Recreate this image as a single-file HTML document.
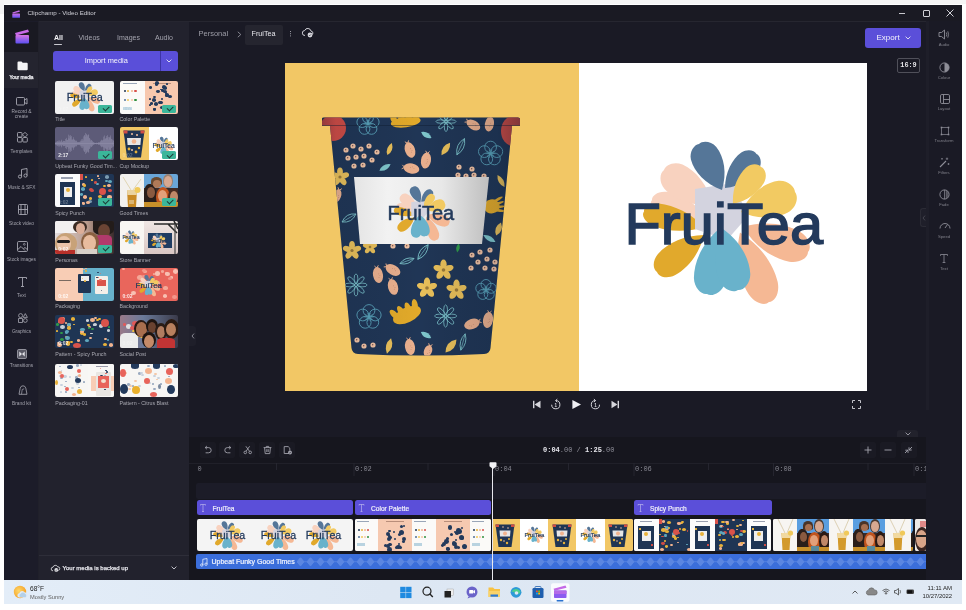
<!DOCTYPE html>
<html><head><meta charset="utf-8">
<style>
*{margin:0;padding:0;box-sizing:border-box}
html,body{width:966px;height:610px;overflow:hidden;background:#ffffff;font-family:"Liberation Sans",sans-serif;position:relative}
.a{position:absolute}
svg{position:absolute;overflow:visible}
.sl{position:absolute;left:4px;width:35px;text-align:center;color:#a3a3ad;font-size:4.8px;line-height:5px;white-space:nowrap}
.tl{position:absolute;color:#a9a9b2;font-size:5.3px;white-space:nowrap;line-height:6px}
.th{position:absolute;width:59px;height:33px;border-radius:2px;overflow:hidden}
.ck{position:absolute;right:2px;bottom:1px;width:14px;height:8px;background:#3bb69a;border-radius:1.5px}
.ck:after{content:"";position:absolute;left:4.5px;top:1.2px;width:5px;height:2.6px;border-left:1px solid #1d3b36;border-bottom:1px solid #1d3b36;transform:rotate(-45deg)}
.dur{position:absolute;left:3px;bottom:2px;font-size:5px;color:#fff;font-weight:bold;opacity:.85}
.rl{position:absolute;left:926px;width:36px;text-align:center;color:#80808a;font-size:4.2px;line-height:5px;-webkit-font-smoothing:antialiased}
</style></head><body><div id="root" style="position:absolute;left:0;top:0;width:966px;height:610px;overflow:hidden;will-change:transform">
<div class="a" style="left:0;top:0;width:966px;height:4px;background:#f5f5f5"></div>
<div class="a" style="left:0;top:0;width:3.5px;height:14px;background:#f3f3f3"></div>
<!-- window background -->
<div class="a" style="left:4px;top:5px;width:958px;height:575px;background:#1b1b25"></div>
<!-- title bar -->
<div class="a" style="left:4px;top:5px;width:958px;height:16px;background:#1a1a23"></div>
<div class="a" style="left:39px;top:21px;width:887px;height:1px;background:#262630"></div>
<svg style="left:12px;top:9.5px" width="9" height="8"><defs><linearGradient id="lg0" x1="0" y1="0" x2="0" y2="1"><stop offset="0" stop-color="#d070e6"/><stop offset="1" stop-color="#6250f0"/></linearGradient></defs><path d="M0.3 2.4L7.3 0.3L7.9 1.8L0.9 3.6Z" fill="#c46ae8"/><rect x="0.3" y="3.4" width="7.7" height="4.4" rx="0.6" fill="url(#lg0)"/></svg>
<div class="a" style="left:27.5px;top:9px;font-size:6.2px;color:#cfcfd6;white-space:nowrap;line-height:8px">Clipchamp - Video Editor</div>
<div class="a" style="left:899.3px;top:12.6px;width:6px;height:1.2px;background:#c8c8ce"></div>
<div class="a" style="left:922.5px;top:9.5px;width:7px;height:7px;border:1px solid #d0d0d6;border-radius:1px"></div>
<svg style="left:946px;top:9px" width="8" height="8"><path d="M0.5 0.5L7.5 7.5M7.5 0.5L0.5 7.5" stroke="#d0d0d6" stroke-width="1"/></svg>

<!-- left sidebar -->
<div class="a" style="left:4px;top:21px;width:35px;height:559px;background:#1c1c29"></div>
<div class="a" style="left:4px;top:22px;width:35px;height:30px;background:#191922"></div>
<div class="a" style="left:4px;top:52px;width:35px;height:36px;background:#24242f"></div>
<div class="a" style="left:38px;top:21px;width:1px;height:559px;background:#20202a"></div>
<!-- logo -->
<svg style="left:15px;top:29px" width="15" height="15"><defs><linearGradient id="lg" x1="0" y1="0" x2="0" y2="1"><stop offset="0" stop-color="#d774e4"/><stop offset="1" stop-color="#5b4ff0"/></linearGradient></defs>
<path d="M0 4L13 0.5L14 3L1 6.5Z" fill="#c86ae8"/><rect x="0.5" y="6" width="13.5" height="8.5" rx="1" fill="url(#lg)"/></svg>
<!-- sidebar icons -->
<svg style="left:17px;top:61px" width="11" height="9"><path d="M0.5 1.5a1 1 0 0 1 1-1h3l1.2 1.3h4a1 1 0 0 1 1 1v5.5a1 1 0 0 1-1 1h-8.2a1 1 0 0 1-1-1z" fill="#f4f4f6"/></svg>
<div class="sl" style="top:75px;color:#f0f0f4;-webkit-text-stroke:0.25px #f0f0f4">Your media</div>
<svg style="left:16px;top:97px" width="12" height="9"><rect x="0.5" y="0.5" width="8" height="7.5" rx="1" fill="none" stroke="#a8a8b2" stroke-width="0.9"/><path d="M8.5 3L11 1.5V7L8.5 5.5" fill="none" stroke="#a8a8b2" stroke-width="0.9"/></svg>
<div class="sl" style="top:110px;line-height:4.8px">Record &amp;<br>create</div>
<svg style="left:17px;top:132px" width="11" height="11"><rect x="0.5" y="5.5" width="4.5" height="4.5" rx="0.8" fill="none" stroke="#a8a8b2" stroke-width="0.9"/><rect x="5.8" y="5.5" width="4.5" height="4.5" rx="0.8" fill="none" stroke="#a8a8b2" stroke-width="0.9"/><rect x="0.5" y="0.5" width="4.5" height="4.5" rx="0.8" fill="none" stroke="#a8a8b2" stroke-width="0.9"/><path d="M8 0.3L10.5 2.8L8 5.3L5.5 2.8Z" fill="none" stroke="#a8a8b2" stroke-width="0.9"/></svg>
<div class="sl" style="top:149px">Templates</div>
<svg style="left:17.5px;top:168px" width="10" height="11"><path d="M3.5 8.5V1.5L9 0.5V7.5" fill="none" stroke="#a8a8b2" stroke-width="0.9"/><circle cx="2" cy="8.6" r="1.6" fill="none" stroke="#a8a8b2" stroke-width="0.9"/><circle cx="7.5" cy="7.6" r="1.6" fill="none" stroke="#a8a8b2" stroke-width="0.9"/></svg>
<div class="sl" style="top:184.5px">Music &amp; SFX</div>
<svg style="left:17.5px;top:204px" width="10" height="11"><rect x="0.5" y="0.5" width="9" height="10" rx="1" fill="none" stroke="#a8a8b2" stroke-width="0.9"/><path d="M0.5 5.5h9M3 0.5v10M7 0.5v10" stroke="#a8a8b2" stroke-width="0.9"/></svg>
<div class="sl" style="top:220.5px">Stock video</div>
<svg style="left:17px;top:240.5px" width="11" height="11"><rect x="0.5" y="0.5" width="10" height="10" rx="1.2" fill="none" stroke="#a8a8b2" stroke-width="0.9"/><path d="M0.8 8.5L4 5.5L8 9.5M6.5 7.5L8 6.5L10.2 8.5" fill="none" stroke="#a8a8b2" stroke-width="0.9"/><circle cx="7.3" cy="3.3" r="0.9" fill="none" stroke="#a8a8b2" stroke-width="0.7"/></svg>
<div class="sl" style="top:256.5px">Stock images</div>
<svg style="left:17.5px;top:276.5px" width="9" height="10"><path d="M0.5 2V0.5H8.5V2M4.5 0.5V9.5M3 9.5H6" fill="none" stroke="#a8a8b2" stroke-width="0.9"/></svg>
<div class="sl" style="top:292.5px">Text</div>
<svg style="left:17.5px;top:312.5px" width="10" height="10"><g fill="none" stroke="#a8a8b2" stroke-width="0.8"><circle cx="2.6" cy="2.6" r="2"/><path d="M7.3 0.6L9.4 4.4H5.2Z"/><rect x="0.6" y="5.6" width="3.8" height="3.8"/><circle cx="7.3" cy="7.5" r="1.9"/></g></svg>
<div class="sl" style="top:328.5px">Graphics</div>
<svg style="left:17px;top:348.5px" width="10" height="10"><rect x="0.5" y="0.5" width="9" height="9" rx="1.2" fill="#5a5a66" stroke="#a8a8b2" stroke-width="0.8"/><path d="M2.3 2.5L5 5L2.3 7.5ZM7.7 2.5L5 5L7.7 7.5Z" fill="#e2e2e8"/></svg>
<div class="sl" style="top:362.5px">Transitions</div>
<svg style="left:17.5px;top:384.5px" width="10" height="10"><path d="M1 9.3L2.2 3.2Q2.8 0.8 5 0.8Q7.2 0.8 7.8 3.2L9 9.3Z" fill="none" stroke="#a8a8b2" stroke-width="0.8"/><path d="M3.5 9.3L4.2 4.5L6.2 3.8" fill="none" stroke="#a8a8b2" stroke-width="0.7"/></svg>
<div class="sl" style="top:400.5px">Brand kit</div>

<!-- media panel -->
<div class="a" style="left:39px;top:22px;width:150px;height:558px;background:#22222d"></div>
<div class="a" style="left:54px;top:33.5px;font-size:7px;color:#f2f2f5;font-weight:bold;line-height:8px">All</div>
<div class="a" style="left:54px;top:43.5px;width:8px;height:1.5px;border-radius:1px;background:#c9c9d0"></div>
<div class="a" style="left:78.5px;top:33.5px;font-size:7px;color:#a4a4ae;line-height:8px">Videos</div>
<div class="a" style="left:117px;top:33.5px;font-size:7px;color:#a4a4ae;line-height:8px">Images</div>
<div class="a" style="left:155px;top:33.5px;font-size:7px;color:#a4a4ae;line-height:8px">Audio</div>
<div class="a" style="left:52.5px;top:50.5px;width:125.5px;height:20px;border-radius:3px;background:#5a4fd9"></div>
<div class="a" style="left:160px;top:50.5px;width:0.8px;height:20px;background:#3d34a6"></div>
<div class="a" style="left:52.5px;top:56px;width:107.5px;text-align:center;font-size:7.4px;color:#f4f4fb;line-height:9px">Import media</div>
<svg style="left:166px;top:58.5px" width="6" height="4"><path d="M0.6 0.6L3 3L5.4 0.6" fill="none" stroke="#e8e8f5" stroke-width="0.9"/></svg>
<!-- backed up -->
<div class="a" style="left:39px;top:555px;width:150px;height:1px;background:#2e2e39"></div>
<svg style="left:51px;top:564.5px" width="8" height="7"><path d="M2 5.8a1.8 1.8 0 0 1 0-3.6a2.5 2.5 0 0 1 4.7-0.4a1.8 1.8 0 0 1 0.5 3.6" fill="none" stroke="#e6e6ea" stroke-width="0.8"/><circle cx="5.3" cy="4.9" r="1.9" fill="#e6e6ea"/><path d="M4.4 4.9L5.1 5.6L6.3 4.3" fill="none" stroke="#22222d" stroke-width="0.5"/></svg>
<div class="a" style="left:62.5px;top:564.5px;font-size:6px;color:#e4e4ea;white-space:nowrap;line-height:7px;-webkit-text-stroke:0.25px #e4e4ea">Your media is backed up</div>
<svg style="left:170.5px;top:566px" width="6" height="4"><path d="M0.6 0.6L3 3L5.4 0.6" fill="none" stroke="#d0d0d8" stroke-width="0.9"/></svg>

<div class="th" style="left:55.2px;top:80.6px;width:59px"><div class="a" style="left:0.0px;top:0.0px;width:59.0px;height:33.0px;background:#f1f1f1;"></div><svg style="left:10.74px;top:0.39px" width="37.93" height="30.70"><use href="#logo"/></svg><div class="dur"><span style="opacity:.35">0:07</span></div><div class="ck"></div></div>
<div class="tl" style="left:55.2px;top:116.1px">Title</div>
<div class="th" style="left:119.5px;top:80.6px;width:58.5px"><div class="a" style="left:0.0px;top:0.0px;width:25.0px;height:33.0px;background:#fbfaf8;"></div><div class="a" style="left:25.0px;top:0.0px;width:33.5px;height:33.0px;background:#f7c8ae;"></div><div class="a" style="left:3.0px;top:2.5px;width:14.0px;height:1.4px;background:#9aa6b8;"></div><div class="a" style="left:4.0px;top:9.0px;width:2.4px;height:2.4px;background:#1f3554;border-radius:50%"></div><div class="a" style="left:7.6px;top:9.0px;width:2.4px;height:2.4px;background:#e8b23a;border-radius:50%"></div><div class="a" style="left:11.2px;top:9.0px;width:2.4px;height:2.4px;background:#f2b48f;border-radius:50%"></div><div class="a" style="left:14.8px;top:9.0px;width:2.4px;height:2.4px;background:#d94f4a;border-radius:50%"></div><div class="a" style="left:4.0px;top:18.0px;width:2.4px;height:2.4px;background:#50719a;border-radius:50%"></div><div class="a" style="left:7.6px;top:18.0px;width:2.4px;height:2.4px;background:#f0c85a;border-radius:50%"></div><div class="a" style="left:11.2px;top:18.0px;width:2.4px;height:2.4px;background:#f6c7a8;border-radius:50%"></div><div class="a" style="left:14.8px;top:18.0px;width:2.4px;height:2.4px;background:#2f8f3f;border-radius:50%"></div><div class="a" style="left:3.0px;top:26.0px;width:9.0px;height:3.0px;background:#b9d3e0;"></div><div class="a" style="left:33.0px;top:2.5px;width:18.0px;height:1.4px;background:#b98e7a;"></div><div class="a" style="left:33.8px;top:15.2px;width:2.9px;height:2.5px;background:#233a5c;border-radius:50%"></div><div class="a" style="left:41.1px;top:17.5px;width:2.2px;height:1.8px;background:#233a5c;border-radius:50%"></div><div class="a" style="left:29.3px;top:23.4px;width:2.6px;height:2.2px;background:#233a5c;border-radius:50%"></div><div class="a" style="left:33.7px;top:27.9px;width:3.1px;height:2.7px;background:#233a5c;border-radius:50%"></div><div class="a" style="left:45.7px;top:13.3px;width:3.5px;height:3.0px;background:#233a5c;border-radius:50%"></div><div class="a" style="left:32.0px;top:17.8px;width:4.1px;height:3.5px;background:#233a5c;border-radius:50%"></div><div class="a" style="left:39.5px;top:20.8px;width:3.6px;height:3.1px;background:#233a5c;border-radius:50%"></div><div class="a" style="left:30.3px;top:21.2px;width:3.4px;height:2.9px;background:#233a5c;border-radius:50%"></div><div class="a" style="left:35.0px;top:0.9px;width:4.1px;height:3.5px;background:#233a5c;border-radius:50%"></div><div class="a" style="left:38.5px;top:20.1px;width:4.1px;height:3.5px;background:#233a5c;border-radius:50%"></div><div class="a" style="left:43.3px;top:25.8px;width:2.9px;height:2.5px;background:#233a5c;border-radius:50%"></div><div class="a" style="left:45.0px;top:12.4px;width:4.2px;height:3.6px;background:#233a5c;border-radius:50%"></div><div class="a" style="left:46.6px;top:2.7px;width:2.3px;height:2.0px;background:#233a5c;border-radius:50%"></div><div class="a" style="left:33.3px;top:27.0px;width:3.0px;height:2.6px;background:#233a5c;border-radius:50%"></div><div class="a" style="left:41.5px;top:8.4px;width:3.2px;height:2.7px;background:#233a5c;border-radius:50%"></div><div class="a" style="left:36.7px;top:9.8px;width:3.4px;height:2.9px;background:#233a5c;border-radius:50%"></div><div class="a" style="left:40.7px;top:25.3px;width:3.6px;height:3.1px;background:#233a5c;border-radius:50%"></div><div class="a" style="left:47.6px;top:24.0px;width:4.4px;height:3.7px;background:#233a5c;border-radius:50%"></div><div class="a" style="left:42.4px;top:4.6px;width:4.1px;height:3.5px;background:#233a5c;border-radius:50%"></div><div class="a" style="left:48.3px;top:25.3px;width:3.4px;height:2.9px;background:#233a5c;border-radius:50%"></div><div class="a" style="left:43.3px;top:5.9px;width:4.0px;height:3.4px;background:#233a5c;border-radius:50%"></div><div class="a" style="left:40.5px;top:8.0px;width:2.2px;height:1.8px;background:#233a5c;border-radius:50%"></div><div class="a" style="left:46.1px;top:27.7px;width:2.2px;height:1.9px;background:#233a5c;border-radius:50%"></div><div class="a" style="left:45.0px;top:11.5px;width:2.4px;height:2.0px;background:#233a5c;border-radius:50%"></div><div class="a" style="left:34.9px;top:21.5px;width:4.1px;height:3.5px;background:#233a5c;border-radius:50%"></div><div class="a" style="left:29.9px;top:17.2px;width:2.1px;height:1.8px;background:#233a5c;border-radius:50%"></div><div class="a" style="left:43.4px;top:9.3px;width:4.1px;height:3.5px;background:#233a5c;border-radius:50%"></div><div class="a" style="left:48.6px;top:14.2px;width:4.4px;height:3.7px;background:#233a5c;border-radius:50%"></div><div class="a" style="left:35.2px;top:2.2px;width:3.4px;height:2.9px;background:#233a5c;border-radius:50%"></div><div class="a" style="left:29.6px;top:5.5px;width:3.0px;height:2.5px;background:#233a5c;border-radius:50%"></div><div class="dur"><span style="opacity:.3">0:07</span></div><div class="ck"></div></div>
<div class="tl" style="left:119.5px;top:116.1px">Color Palette</div>
<div class="th" style="left:55.2px;top:127.4px;width:59px"><div class="a" style="left:0.0px;top:0.0px;width:59.0px;height:33.0px;background:#5d5b78;"></div><svg style="left:0;top:0" width="59" height="33"><g fill="#8e8ca8" opacity=".9"><rect x="0.0" y="15.49" width="0.55" height="2.03"/><rect x="0.5" y="15.57" width="0.55" height="1.87"/><rect x="1.0" y="14.63" width="0.55" height="3.74"/><rect x="1.5" y="15.39" width="0.55" height="2.22"/><rect x="2.0" y="14.27" width="0.55" height="4.46"/><rect x="2.5" y="14.38" width="0.55" height="4.24"/><rect x="3.0" y="14.95" width="0.55" height="3.10"/><rect x="3.5" y="13.55" width="0.55" height="5.91"/><rect x="4.0" y="14.77" width="0.55" height="3.46"/><rect x="4.5" y="13.47" width="0.55" height="6.05"/><rect x="5.0" y="14.58" width="0.55" height="3.84"/><rect x="5.5" y="14.54" width="0.55" height="3.92"/><rect x="6.0" y="13.61" width="0.55" height="5.78"/><rect x="6.5" y="12.64" width="0.55" height="7.71"/><rect x="7.0" y="14.78" width="0.55" height="3.44"/><rect x="7.5" y="14.72" width="0.55" height="3.57"/><rect x="8.0" y="14.08" width="0.55" height="4.84"/><rect x="8.5" y="13.77" width="0.55" height="5.46"/><rect x="9.0" y="14.07" width="0.55" height="4.85"/><rect x="9.5" y="14.10" width="0.55" height="4.80"/><rect x="10.0" y="11.93" width="0.55" height="9.14"/><rect x="10.5" y="14.44" width="0.55" height="4.11"/><rect x="11.0" y="10.85" width="0.55" height="11.30"/><rect x="11.5" y="12.70" width="0.55" height="7.61"/><rect x="12.0" y="12.99" width="0.55" height="7.02"/><rect x="12.5" y="12.78" width="0.55" height="7.43"/><rect x="13.0" y="11.31" width="0.55" height="10.39"/><rect x="13.5" y="7.65" width="0.55" height="17.69"/><rect x="14.0" y="11.59" width="0.55" height="9.83"/><rect x="14.5" y="8.64" width="0.55" height="15.73"/><rect x="15.0" y="8.16" width="0.55" height="16.68"/><rect x="15.5" y="10.10" width="0.55" height="12.79"/><rect x="16.0" y="9.08" width="0.55" height="14.84"/><rect x="16.5" y="12.57" width="0.55" height="7.85"/><rect x="17.0" y="12.83" width="0.55" height="7.34"/><rect x="17.5" y="12.29" width="0.55" height="8.43"/><rect x="18.0" y="10.24" width="0.55" height="12.53"/><rect x="18.5" y="12.06" width="0.55" height="8.87"/><rect x="19.0" y="13.05" width="0.55" height="6.89"/><rect x="19.5" y="12.55" width="0.55" height="7.90"/><rect x="20.0" y="13.51" width="0.55" height="5.98"/><rect x="20.5" y="14.35" width="0.55" height="4.31"/><rect x="21.0" y="13.60" width="0.55" height="5.80"/><rect x="21.5" y="14.23" width="0.55" height="4.55"/><rect x="22.0" y="15.28" width="0.55" height="2.44"/><rect x="22.5" y="15.02" width="0.55" height="2.96"/><rect x="23.0" y="15.28" width="0.55" height="2.44"/><rect x="23.5" y="14.95" width="0.55" height="3.09"/><rect x="24.0" y="14.87" width="0.55" height="3.26"/><rect x="24.5" y="15.23" width="0.55" height="2.54"/><rect x="25.0" y="13.68" width="0.55" height="5.64"/><rect x="25.5" y="15.02" width="0.55" height="2.96"/><rect x="26.0" y="13.89" width="0.55" height="5.22"/><rect x="26.5" y="12.25" width="0.55" height="8.50"/><rect x="27.0" y="13.81" width="0.55" height="5.38"/><rect x="27.5" y="11.82" width="0.55" height="9.36"/><rect x="28.0" y="13.48" width="0.55" height="6.05"/><rect x="28.5" y="9.38" width="0.55" height="14.24"/><rect x="29.0" y="8.01" width="0.55" height="16.99"/><rect x="29.5" y="8.67" width="0.55" height="15.67"/><rect x="30.0" y="5.96" width="0.55" height="21.08"/><rect x="30.5" y="9.93" width="0.55" height="13.14"/><rect x="31.0" y="6.88" width="0.55" height="19.25"/><rect x="31.5" y="7.76" width="0.55" height="17.47"/><rect x="32.0" y="8.16" width="0.55" height="16.68"/><rect x="32.5" y="9.49" width="0.55" height="14.02"/><rect x="33.0" y="7.51" width="0.55" height="17.97"/><rect x="33.5" y="7.75" width="0.55" height="17.50"/><rect x="34.0" y="11.20" width="0.55" height="10.60"/><rect x="34.5" y="11.02" width="0.55" height="10.96"/><rect x="35.0" y="14.17" width="0.55" height="4.67"/><rect x="35.5" y="12.43" width="0.55" height="8.13"/><rect x="36.0" y="13.26" width="0.55" height="6.47"/><rect x="36.5" y="13.05" width="0.55" height="6.91"/><rect x="37.0" y="13.97" width="0.55" height="5.06"/><rect x="37.5" y="15.23" width="0.55" height="2.53"/><rect x="38.0" y="15.31" width="0.55" height="2.38"/><rect x="38.5" y="15.18" width="0.55" height="2.64"/><rect x="39.0" y="15.97" width="0.55" height="1.07"/><rect x="39.5" y="15.65" width="0.55" height="1.70"/><rect x="40.0" y="15.95" width="0.55" height="1.10"/><rect x="40.5" y="16.02" width="0.55" height="0.96"/><rect x="41.0" y="16.08" width="0.55" height="0.84"/><rect x="41.5" y="15.54" width="0.55" height="1.91"/><rect x="42.0" y="15.98" width="0.55" height="1.03"/><rect x="42.5" y="15.84" width="0.55" height="1.31"/><rect x="43.0" y="15.65" width="0.55" height="1.70"/><rect x="43.5" y="15.05" width="0.55" height="2.90"/><rect x="44.0" y="15.77" width="0.55" height="1.45"/><rect x="44.5" y="15.15" width="0.55" height="2.70"/><rect x="45.0" y="14.75" width="0.55" height="3.50"/><rect x="45.5" y="13.79" width="0.55" height="5.41"/><rect x="46.0" y="13.43" width="0.55" height="6.14"/><rect x="46.5" y="12.75" width="0.55" height="7.50"/><rect x="47.0" y="13.93" width="0.55" height="5.14"/><rect x="47.5" y="13.00" width="0.55" height="7.00"/><rect x="48.0" y="12.70" width="0.55" height="7.59"/><rect x="48.5" y="9.66" width="0.55" height="13.69"/><rect x="49.0" y="8.44" width="0.55" height="16.13"/><rect x="49.5" y="12.41" width="0.55" height="8.19"/><rect x="50.0" y="11.90" width="0.55" height="9.20"/><rect x="50.5" y="11.22" width="0.55" height="10.57"/><rect x="51.0" y="10.96" width="0.55" height="11.08"/><rect x="51.5" y="8.95" width="0.55" height="15.10"/><rect x="52.0" y="8.11" width="0.55" height="16.78"/><rect x="52.5" y="10.59" width="0.55" height="11.82"/><rect x="53.0" y="12.61" width="0.55" height="7.79"/><rect x="53.5" y="9.93" width="0.55" height="13.13"/><rect x="54.0" y="10.66" width="0.55" height="11.69"/><rect x="54.5" y="9.94" width="0.55" height="13.13"/><rect x="55.0" y="8.46" width="0.55" height="16.08"/><rect x="55.5" y="10.59" width="0.55" height="11.83"/><rect x="56.0" y="12.04" width="0.55" height="8.92"/><rect x="56.5" y="12.26" width="0.55" height="8.49"/><rect x="57.0" y="12.68" width="0.55" height="7.65"/><rect x="57.5" y="14.91" width="0.55" height="3.17"/><rect x="58.0" y="13.25" width="0.55" height="6.50"/><rect x="58.5" y="13.99" width="0.55" height="5.02"/><rect x="0" y="16" width="59" height="1"/></g></svg><div class="dur">2:17</div><div class="ck"></div></div>
<div class="tl" style="left:55.2px;top:162.9px">Upbeat Funky Good Tim...</div>
<div class="th" style="left:119.5px;top:127.4px;width:58.5px"><div class="a" style="left:0.0px;top:0.0px;width:29.0px;height:33.0px;background:#f2c765;"></div><div class="a" style="left:29.0px;top:0.0px;width:29.5px;height:33.0px;background:#ffffff;"></div><svg style="left:3.5px;top:3px" width="22" height="28"><path d="M0.5 0.5H21.5L18 27.5H4Z" fill="#1f3554"/><path d="M0.5 0.5H4.5V3.5H0.8Z" fill="#cf4c45"/><path d="M17.5 0.5H21.5L21.2 3.5H17.5Z" fill="#cf4c45"/><path d="M4 8H18L17.4 15H4.6Z" fill="#e6e6e6"/><circle cx="11" cy="11.5" r="2.3" fill="#f2b48f"/><g fill="#e8b23a"><circle cx="6" cy="19" r="1.4"/><circle cx="13" cy="22" r="1.4"/><circle cx="16" cy="18" r="1.2"/></g><g fill="#f2c2a2"><circle cx="9" cy="4" r="1"/><circle cx="14" cy="5" r="1"/><circle cx="9" cy="20" r="1"/></g></svg><svg style="left:32.21px;top:8.81px" width="23.57" height="19.08"><use href="#logo"/></svg><div class="dur"><span style="opacity:.3">0:02</span></div><div class="ck"></div></div>
<div class="tl" style="left:119.5px;top:162.9px">Cup Mockup</div>
<div class="th" style="left:55.2px;top:174.3px;width:59px"><div class="a" style="left:0.0px;top:0.0px;width:25.0px;height:33.0px;background:#fbfbfb;"></div><div class="a" style="left:25.0px;top:0.0px;width:34.0px;height:33.0px;background:#1f3554;"></div><div class="a" style="left:6.0px;top:3.0px;width:12.0px;height:1.4px;background:#9aa0b0;"></div><div class="a" style="left:5.0px;top:8.0px;width:15.0px;height:23.0px;background:#1f3554;"></div><div class="a" style="left:8.5px;top:13.0px;width:8.0px;height:10.0px;background:#eeeeee;"></div><div class="a" style="left:10.5px;top:14.0px;width:4.0px;height:4.0px;background:#e8b23a;border-radius:50%"></div><div class="a" style="left:43.1px;top:20.8px;width:3.9px;height:3.3px;background:#e8b23a;border-radius:50%"></div><div class="a" style="left:52.3px;top:20.7px;width:4.2px;height:3.6px;background:#f2b48f;border-radius:50%"></div><div class="a" style="left:25.8px;top:13.0px;width:4.3px;height:3.6px;background:#5fa7bd;border-radius:50%"></div><div class="a" style="left:43.8px;top:25.2px;width:2.1px;height:1.8px;background:#e8b23a;border-radius:50%"></div><div class="a" style="left:38.6px;top:6.9px;width:3.2px;height:2.7px;background:#cf4c45;border-radius:50%"></div><div class="a" style="left:41.6px;top:0.4px;width:2.4px;height:2.0px;background:#f2b48f;border-radius:50%"></div><div class="a" style="left:33.1px;top:25.7px;width:3.8px;height:3.2px;background:#7a9ab0;border-radius:50%"></div><div class="a" style="left:29.6px;top:22.3px;width:2.2px;height:1.8px;background:#e8b23a;border-radius:50%"></div><div class="a" style="left:42.9px;top:3.5px;width:1.8px;height:1.5px;background:#f2b48f;border-radius:50%"></div><div class="a" style="left:50.3px;top:5.9px;width:2.4px;height:2.0px;background:#5fa7bd;border-radius:50%"></div><div class="a" style="left:53.5px;top:24.4px;width:2.6px;height:2.2px;background:#e8b23a;border-radius:50%"></div><div class="a" style="left:52.9px;top:15.1px;width:3.6px;height:3.0px;background:#cf4c45;border-radius:50%"></div><div class="a" style="left:30.9px;top:26.3px;width:3.6px;height:3.1px;background:#f2b48f;border-radius:50%"></div><div class="a" style="left:53.0px;top:25.0px;width:2.6px;height:2.2px;background:#7a9ab0;border-radius:50%"></div><div class="a" style="left:35.5px;top:4.6px;width:2.2px;height:1.9px;background:#e8b23a;border-radius:50%"></div><div class="a" style="left:26.9px;top:8.4px;width:3.4px;height:2.9px;background:#f2b48f;border-radius:50%"></div><div class="a" style="left:25.1px;top:19.0px;width:2.7px;height:2.3px;background:#5fa7bd;border-radius:50%"></div><div class="a" style="left:34.0px;top:22.9px;width:3.0px;height:2.6px;background:#e8b23a;border-radius:50%"></div><div class="a" style="left:34.2px;top:13.5px;width:3.6px;height:3.1px;background:#cf4c45;border-radius:50%"></div><div class="a" style="left:26.7px;top:27.3px;width:1.9px;height:1.6px;background:#f2b48f;border-radius:50%"></div><div class="a" style="left:46.7px;top:23.7px;width:1.8px;height:1.6px;background:#7a9ab0;border-radius:50%"></div><div class="a" style="left:47.8px;top:10.3px;width:3.3px;height:2.8px;background:#e8b23a;border-radius:50%"></div><div class="a" style="left:25.3px;top:1.3px;width:2.3px;height:1.9px;background:#f2b48f;border-radius:50%"></div><div class="a" style="left:52.7px;top:5.5px;width:3.8px;height:3.2px;background:#5fa7bd;border-radius:50%"></div><div class="a" style="left:52.0px;top:26.4px;width:2.7px;height:2.3px;background:#e8b23a;border-radius:50%"></div><div class="a" style="left:35.3px;top:14.7px;width:3.8px;height:3.2px;background:#cf4c45;border-radius:50%"></div><div class="a" style="left:28.1px;top:21.0px;width:3.9px;height:3.3px;background:#f2b48f;border-radius:50%"></div><div class="a" style="left:49.9px;top:1.0px;width:4.3px;height:3.6px;background:#7a9ab0;border-radius:50%"></div><div class="a" style="left:27.6px;top:9.5px;width:3.4px;height:2.9px;background:#e8b23a;border-radius:50%"></div><div class="a" style="left:51.6px;top:9.5px;width:4.2px;height:3.6px;background:#f2b48f;border-radius:50%"></div><div class="a" style="left:40.8px;top:8.7px;width:2.6px;height:2.2px;background:#5fa7bd;border-radius:50%"></div><div class="a" style="left:30.1px;top:2.2px;width:2.2px;height:1.9px;background:#e8b23a;border-radius:50%"></div><div class="a" style="left:45.0px;top:27.9px;width:2.2px;height:1.9px;background:#cf4c45;border-radius:50%"></div><div class="a" style="left:26.4px;top:27.6px;width:3.2px;height:2.7px;background:#f2b48f;border-radius:50%"></div><div class="a" style="left:44.0px;top:14.0px;width:7.0px;height:7.0px;background:#d9534a;border-radius:50%"></div><div class="a" style="left:25.0px;top:0.0px;width:3.0px;height:6.0px;background:#d9534a;"></div><div class="dur"><span style="opacity:.35">0:02</span></div><div class="ck"></div></div>
<div class="tl" style="left:55.2px;top:209.8px">Spicy Punch</div>
<div class="th" style="left:119.5px;top:174.3px;width:58.5px"><div class="a" style="left:0.0px;top:0.0px;width:24.0px;height:33.0px;background:#f3f1ee;"></div><svg style="left:1px;top:0" width="22" height="33"><path d="M2 3L10 16M20 5L12 16" stroke="#d8c89a" stroke-width="0.7"/><path d="M6 16H16L15 33H7Z" fill="#c98a24"/><path d="M6 16H16L15.7 21H6.3Z" fill="#ead3a0"/><circle cx="16.5" cy="16" r="3" fill="#f0c95a"/><rect x="8" y="26" width="5" height="4" fill="#e8d2a8" opacity=".6"/></svg><div class="a" style="left:24.0px;top:0.0px;width:34.5px;height:33.0px;background:#6aa6d8;"></div><div class="a" style="left:24.0px;top:14.0px;width:34.5px;height:19.0px;background:#3a2c2a;"></div><div class="a" style="left:24.0px;top:10.0px;width:12.0px;height:23.0px;background:#2a1e1a;border-radius:40% 40% 0 0"></div><div class="a" style="left:27.0px;top:13.0px;width:8.0px;height:11.0px;background:#8a5a40;border-radius:50%"></div><div class="a" style="left:31.0px;top:3.0px;width:11.0px;height:8.0px;background:#6a4a30;border-radius:50% 50% 20% 20%"></div><div class="a" style="left:33.0px;top:6.0px;width:8.0px;height:8.0px;background:#b07a58;border-radius:50%"></div><div class="a" style="left:43.0px;top:0.0px;width:10.0px;height:14.0px;background:#9a8070;border-radius:50%"></div><div class="a" style="left:44.0px;top:2.0px;width:8.0px;height:11.0px;background:#d8a890;border-radius:50%"></div><div class="a" style="left:36.0px;top:13.0px;width:14.0px;height:20.0px;background:#c0541e;border-radius:50%"></div><div class="a" style="left:38.0px;top:16.0px;width:9.0px;height:12.0px;background:#e2a07a;border-radius:50%"></div><div class="a" style="left:48.0px;top:14.0px;width:11.0px;height:19.0px;background:#4a2a20;border-radius:50%"></div><div class="a" style="left:50.0px;top:17.0px;width:8.0px;height:12.0px;background:#c08868;border-radius:50%"></div><div class="a" style="left:24.0px;top:28.0px;width:34.5px;height:5.0px;background:#c8902a;"></div><div class="ck"></div></div>
<div class="tl" style="left:119.5px;top:209.8px">Good Times</div>
<div class="th" style="left:55.2px;top:221px;width:59px"><div class="a" style="left:0.0px;top:0.0px;width:59.0px;height:33.0px;background:linear-gradient(90deg,#e2dcdc,#b89a8c 55%,#3a2c2c);"></div><div class="a" style="left:0.0px;top:0.0px;width:22.0px;height:12.0px;background:#f2f0f0;"></div><div class="a" style="left:38.0px;top:0.0px;width:21.0px;height:14.0px;background:#231c1a;border-radius:0 0 40% 40%"></div><div class="a" style="left:43.0px;top:3.0px;width:12.0px;height:14.0px;background:#6a4434;border-radius:50%"></div><div class="a" style="left:40.0px;top:14.0px;width:17.0px;height:13.0px;background:#b23a6c;border-radius:30%"></div><div class="a" style="left:18.0px;top:0.0px;width:14.0px;height:12.0px;background:#3a2a22;border-radius:50%"></div><div class="a" style="left:21.0px;top:2.0px;width:9.0px;height:11.0px;background:#dcae98;border-radius:50%"></div><div class="a" style="left:26.0px;top:11.0px;width:18.0px;height:20.0px;background:#8a6040;border-radius:50%"></div><div class="a" style="left:28.0px;top:14.0px;width:13.0px;height:16.0px;background:#e8bc9e;border-radius:50%"></div><div class="a" style="left:0.0px;top:12.0px;width:22.0px;height:21.0px;background:#c8a278;border-radius:50%"></div><div class="a" style="left:2.0px;top:15.0px;width:14.0px;height:16.0px;background:#eac4a8;border-radius:50%"></div><div class="a" style="left:2.0px;top:19.0px;width:13.0px;height:3.0px;background:#1c1c1c;border-radius:1.5px"></div><div class="a" style="left:0.0px;top:29.0px;width:20.0px;height:4.0px;background:#b8302a;"></div><div class="a" style="left:22.0px;top:28.0px;width:20.0px;height:5.0px;background:#d8d0c8;"></div><div class="dur">0:02</div><div class="ck"></div></div>
<div class="tl" style="left:55.2px;top:256.5px">Personas</div>
<div class="th" style="left:119.5px;top:221px;width:58.5px"><div class="a" style="left:0.0px;top:0.0px;width:24.0px;height:33.0px;background:#f8f6f3;"></div><svg style="left:2.89px;top:8.58px" width="18.21" height="14.74"><use href="#logo"/></svg><div class="a" style="left:24.0px;top:0.0px;width:34.5px;height:33.0px;background:linear-gradient(#efe6e4,#d9c7c4);"></div><div class="a" style="left:28.0px;top:12.0px;width:24.0px;height:15.0px;background:#1f3c62;"></div><svg style="left:29.86px;top:11.53px" width="19.29" height="15.61"><use href="#logo"/></svg><svg style="left:24px;top:0" width="35" height="33"><path d="M10 3L34 3M30 0L34 8M24 3L33 12" stroke="#2a2a2a" stroke-width="1.6"/><path d="M31 3V33" stroke="#4a4a4a" stroke-width="1.2"/></svg></div>
<div class="tl" style="left:119.5px;top:256.5px">Store Banner</div>
<div class="th" style="left:55.2px;top:267.8px;width:59px"><div class="a" style="left:0.0px;top:0.0px;width:28.0px;height:33.0px;background:#f8cdb5;"></div><div class="a" style="left:28.0px;top:0.0px;width:31.0px;height:33.0px;background:#67b2cc;"></div><div class="a" style="left:4.0px;top:12.0px;width:12.0px;height:1.2px;background:#7a6a60;"></div><div class="a" style="left:23.0px;top:6.0px;width:13.0px;height:19.0px;background:#1f3554;border-radius:1px"></div><div class="a" style="left:25.5px;top:8.0px;width:8.0px;height:5.0px;background:#eeeeee;"></div><div class="a" style="left:26.7px;top:10.5px;width:1.4px;height:1.2px;background:#e8b23a;border-radius:50%"></div><div class="a" style="left:29.9px;top:0.2px;width:1.8px;height:1.5px;background:#f2b48f;border-radius:50%"></div><div class="a" style="left:30.2px;top:2.3px;width:1.9px;height:1.6px;background:#e8b23a;border-radius:50%"></div><div class="a" style="left:27.9px;top:1.1px;width:1.7px;height:1.4px;background:#f2b48f;border-radius:50%"></div><div class="a" style="left:28.6px;top:12.7px;width:2.1px;height:1.8px;background:#e8b23a;border-radius:50%"></div><div class="a" style="left:40.0px;top:8.0px;width:13.0px;height:18.0px;background:#f3efe9;border-radius:1px"></div><div class="a" style="left:42.0px;top:12.0px;width:9.0px;height:6.0px;background:#d9534a;"></div><div class="a" style="left:45.4px;top:22.0px;width:1.8px;height:1.6px;background:#233a5c;border-radius:50%"></div><div class="a" style="left:44.1px;top:11.0px;width:2.4px;height:2.0px;background:#e86a5a;border-radius:50%"></div><div class="a" style="left:42.3px;top:4.2px;width:1.5px;height:1.3px;background:#233a5c;border-radius:50%"></div><div class="a" style="left:42.1px;top:9.2px;width:1.5px;height:1.3px;background:#e86a5a;border-radius:50%"></div><div class="a" style="left:40.9px;top:9.1px;width:1.6px;height:1.3px;background:#233a5c;border-radius:50%"></div><div class="a" style="left:44.6px;top:5.6px;width:1.3px;height:1.1px;background:#e86a5a;border-radius:50%"></div><div class="dur">0:02</div></div>
<div class="tl" style="left:55.2px;top:303.3px">Packaging</div>
<div class="th" style="left:119.5px;top:267.8px;width:58.5px"><div class="a" style="left:0.0px;top:0.0px;width:58.5px;height:33.0px;background:#e9665c;"></div><div class="a" style="left:30.6px;top:12.0px;width:4.5px;height:3.8px;background:#f4a898;border-radius:50%"></div><div class="a" style="left:11.0px;top:22.8px;width:5.4px;height:4.6px;background:#f8c0b2;border-radius:50%"></div><div class="a" style="left:35.0px;top:4.5px;width:4.3px;height:3.6px;background:#f2958a;border-radius:50%"></div><div class="a" style="left:17.5px;top:7.0px;width:5.8px;height:5.0px;background:#f4a898;border-radius:50%"></div><div class="a" style="left:53.3px;top:1.2px;width:5.5px;height:4.7px;background:#f8c0b2;border-radius:50%"></div><div class="a" style="left:32.3px;top:10.7px;width:3.4px;height:2.9px;background:#f2958a;border-radius:50%"></div><div class="a" style="left:36.1px;top:12.8px;width:4.9px;height:4.1px;background:#f4a898;border-radius:50%"></div><div class="a" style="left:35.4px;top:3.7px;width:5.2px;height:4.4px;background:#f8c0b2;border-radius:50%"></div><div class="a" style="left:52.6px;top:27.1px;width:4.6px;height:3.9px;background:#f2958a;border-radius:50%"></div><div class="a" style="left:2.4px;top:0.1px;width:2.9px;height:2.4px;background:#f4a898;border-radius:50%"></div><div class="a" style="left:50.3px;top:8.5px;width:3.7px;height:3.2px;background:#f8c0b2;border-radius:50%"></div><div class="a" style="left:48.1px;top:8.8px;width:4.4px;height:3.7px;background:#f2958a;border-radius:50%"></div><div class="a" style="left:23.3px;top:1.8px;width:4.5px;height:3.8px;background:#f4a898;border-radius:50%"></div><div class="a" style="left:45.2px;top:4.4px;width:3.2px;height:2.7px;background:#f8c0b2;border-radius:50%"></div><div class="a" style="left:22.1px;top:1.0px;width:4.2px;height:3.6px;background:#f2958a;border-radius:50%"></div><div class="a" style="left:43.8px;top:18.4px;width:4.3px;height:3.7px;background:#f4a898;border-radius:50%"></div><div class="a" style="left:45.7px;top:4.2px;width:4.4px;height:3.8px;background:#f8c0b2;border-radius:50%"></div><div class="a" style="left:20.0px;top:16.8px;width:2.8px;height:2.4px;background:#f2958a;border-radius:50%"></div><div class="a" style="left:41.5px;top:2.7px;width:3.0px;height:2.5px;background:#f4a898;border-radius:50%"></div><div class="a" style="left:43.2px;top:26.5px;width:4.0px;height:3.4px;background:#f8c0b2;border-radius:50%"></div><div class="a" style="left:22.2px;top:6.9px;width:3.4px;height:2.9px;background:#f2958a;border-radius:50%"></div><div class="a" style="left:33.0px;top:5.0px;width:2.8px;height:2.4px;background:#f4a898;border-radius:50%"></div><svg style="left:15.07px;top:6.59px" width="27.86" height="22.55"><use href="#logo"/></svg><div class="dur">0:02</div></div>
<div class="tl" style="left:119.5px;top:303.3px">Background</div>
<div class="th" style="left:55.2px;top:315.4px;width:59px"><div class="a" style="left:0.0px;top:0.0px;width:59.0px;height:33.0px;background:#1f3554;"></div><div class="a" style="left:24.4px;top:15.7px;width:4.6px;height:3.9px;background:#e8b23a;border-radius:50%"></div><div class="a" style="left:25.1px;top:14.2px;width:3.6px;height:3.0px;background:#f2b48f;border-radius:50%"></div><div class="a" style="left:10.0px;top:14.3px;width:3.7px;height:3.1px;background:#5fa7bd;border-radius:50%"></div><div class="a" style="left:42.8px;top:2.6px;width:2.7px;height:2.3px;background:#e8b23a;border-radius:50%"></div><div class="a" style="left:4.9px;top:22.7px;width:3.9px;height:3.3px;background:#2f9a4a;border-radius:50%"></div><div class="a" style="left:2.3px;top:27.5px;width:4.7px;height:4.0px;background:#f2b48f;border-radius:50%"></div><div class="a" style="left:35.3px;top:17.2px;width:2.3px;height:1.9px;background:#c8d0d8;border-radius:50%"></div><div class="a" style="left:0.8px;top:14.8px;width:2.0px;height:1.7px;background:#e8b23a;border-radius:50%"></div><div class="a" style="left:10.3px;top:6.8px;width:1.9px;height:1.6px;background:#f2b48f;border-radius:50%"></div><div class="a" style="left:25.1px;top:12.3px;width:4.3px;height:3.7px;background:#5fa7bd;border-radius:50%"></div><div class="a" style="left:28.0px;top:17.9px;width:3.3px;height:2.8px;background:#e8b23a;border-radius:50%"></div><div class="a" style="left:35.8px;top:12.8px;width:2.6px;height:2.2px;background:#2f9a4a;border-radius:50%"></div><div class="a" style="left:53.9px;top:27.9px;width:4.3px;height:3.7px;background:#f2b48f;border-radius:50%"></div><div class="a" style="left:38.2px;top:8.8px;width:2.5px;height:2.1px;background:#c8d0d8;border-radius:50%"></div><div class="a" style="left:15.6px;top:2.0px;width:4.1px;height:3.5px;background:#e8b23a;border-radius:50%"></div><div class="a" style="left:21.6px;top:23.7px;width:3.0px;height:2.5px;background:#f2b48f;border-radius:50%"></div><div class="a" style="left:51.7px;top:23.7px;width:1.8px;height:1.5px;background:#5fa7bd;border-radius:50%"></div><div class="a" style="left:11.3px;top:25.5px;width:3.2px;height:2.7px;background:#e8b23a;border-radius:50%"></div><div class="a" style="left:52.9px;top:11.1px;width:2.0px;height:1.7px;background:#2f9a4a;border-radius:50%"></div><div class="a" style="left:34.0px;top:21.8px;width:2.6px;height:2.2px;background:#f2b48f;border-radius:50%"></div><div class="a" style="left:4.7px;top:9.3px;width:4.7px;height:4.0px;background:#c8d0d8;border-radius:50%"></div><div class="a" style="left:40.9px;top:3.3px;width:2.5px;height:2.2px;background:#e8b23a;border-radius:50%"></div><div class="a" style="left:5.5px;top:1.7px;width:4.2px;height:3.6px;background:#f2b48f;border-radius:50%"></div><div class="a" style="left:9.6px;top:15.7px;width:3.1px;height:2.7px;background:#5fa7bd;border-radius:50%"></div><div class="a" style="left:10.3px;top:20.5px;width:2.2px;height:1.9px;background:#e8b23a;border-radius:50%"></div><div class="a" style="left:34.8px;top:3.3px;width:3.1px;height:2.6px;background:#2f9a4a;border-radius:50%"></div><div class="a" style="left:11.5px;top:7.6px;width:4.7px;height:4.0px;background:#f2b48f;border-radius:50%"></div><div class="a" style="left:43.4px;top:8.5px;width:4.5px;height:3.8px;background:#c8d0d8;border-radius:50%"></div><div class="a" style="left:11.4px;top:11.0px;width:4.4px;height:3.7px;background:#e8b23a;border-radius:50%"></div><div class="a" style="left:34.7px;top:2.8px;width:4.8px;height:4.1px;background:#f2b48f;border-radius:50%"></div><div class="a" style="left:11.5px;top:7.2px;width:4.1px;height:3.5px;background:#5fa7bd;border-radius:50%"></div><div class="a" style="left:17.8px;top:8.3px;width:2.0px;height:1.7px;background:#e8b23a;border-radius:50%"></div><div class="a" style="left:4.9px;top:16.3px;width:2.5px;height:2.1px;background:#2f9a4a;border-radius:50%"></div><div class="a" style="left:32.5px;top:10.4px;width:3.2px;height:2.7px;background:#f2b48f;border-radius:50%"></div><div class="a" style="left:51.8px;top:13.5px;width:3.5px;height:3.0px;background:#c8d0d8;border-radius:50%"></div><div class="a" style="left:46.8px;top:5.1px;width:2.3px;height:1.9px;background:#e8b23a;border-radius:50%"></div><div class="a" style="left:49.1px;top:22.9px;width:2.5px;height:2.2px;background:#f2b48f;border-radius:50%"></div><div class="a" style="left:10.2px;top:20.7px;width:4.6px;height:3.9px;background:#5fa7bd;border-radius:50%"></div><div class="a" style="left:10.6px;top:26.6px;width:4.4px;height:3.8px;background:#e8b23a;border-radius:50%"></div><div class="a" style="left:32.6px;top:11.8px;width:2.1px;height:1.8px;background:#2f9a4a;border-radius:50%"></div><div class="a" style="left:2.1px;top:27.0px;width:2.5px;height:2.1px;background:#f2b48f;border-radius:50%"></div><div class="a" style="left:38.0px;top:7.2px;width:4.3px;height:3.6px;background:#c8d0d8;border-radius:50%"></div><div class="a" style="left:32.2px;top:8.2px;width:2.3px;height:2.0px;background:#e8b23a;border-radius:50%"></div><div class="a" style="left:38.9px;top:1.9px;width:2.5px;height:2.1px;background:#f2b48f;border-radius:50%"></div><div class="a" style="left:30.2px;top:23.9px;width:3.6px;height:3.1px;background:#5fa7bd;border-radius:50%"></div><div class="a" style="left:15.1px;top:25.7px;width:2.4px;height:2.1px;background:#e8b23a;border-radius:50%"></div><div class="a" style="left:0.9px;top:7.5px;width:3.1px;height:2.7px;background:#2f9a4a;border-radius:50%"></div><div class="a" style="left:3.3px;top:4.9px;width:2.9px;height:2.5px;background:#f2b48f;border-radius:50%"></div><div class="a" style="left:30.9px;top:3.7px;width:2.9px;height:2.5px;background:#c8d0d8;border-radius:50%"></div><div class="a" style="left:48.1px;top:27.5px;width:3.8px;height:3.2px;background:#e8b23a;border-radius:50%"></div><div class="a" style="left:3.0px;top:2.0px;width:7.0px;height:7.0px;background:#d9534a;border-radius:50%"></div><div class="a" style="left:46.0px;top:4.0px;width:8.0px;height:8.0px;background:#d9534a;border-radius:50%"></div><div class="a" style="left:18.0px;top:28.0px;width:8.0px;height:5.0px;background:#d9534a;border-radius:50%"></div><div class="dur">0:02</div></div>
<div class="tl" style="left:55.2px;top:350.9px">Pattern - Spicy Punch</div>
<div class="th" style="left:119.5px;top:315.4px;width:58.5px"><div class="a" style="left:0.0px;top:0.0px;width:58.5px;height:33.0px;background:linear-gradient(90deg,#9a7a8a,#6a7a9a 40%,#3a3a4a);"></div><div class="a" style="left:12.9px;top:5.3px;width:5.9px;height:5.0px;background:#e05a5a;border-radius:50%"></div><div class="a" style="left:15.9px;top:16.5px;width:5.8px;height:4.9px;background:#f0c040;border-radius:50%"></div><div class="a" style="left:2.3px;top:22.2px;width:3.7px;height:3.1px;background:#5a9ae0;border-radius:50%"></div><div class="a" style="left:6.3px;top:9.0px;width:5.2px;height:4.4px;background:#e0e0e0;border-radius:50%"></div><div class="a" style="left:23.5px;top:19.8px;width:4.0px;height:3.4px;background:#a040a0;border-radius:50%"></div><div class="a" style="left:3.2px;top:8.0px;width:3.7px;height:3.1px;background:#e05a5a;border-radius:50%"></div><div class="a" style="left:12.6px;top:14.2px;width:3.3px;height:2.8px;background:#f0c040;border-radius:50%"></div><div class="a" style="left:5.2px;top:24.6px;width:5.1px;height:4.3px;background:#5a9ae0;border-radius:50%"></div><div class="a" style="left:2.4px;top:24.3px;width:4.3px;height:3.7px;background:#e0e0e0;border-radius:50%"></div><div class="a" style="left:9.6px;top:22.5px;width:5.1px;height:4.3px;background:#a040a0;border-radius:50%"></div><div class="a" style="left:10.9px;top:10.7px;width:4.6px;height:3.9px;background:#e05a5a;border-radius:50%"></div><div class="a" style="left:20.9px;top:19.8px;width:3.3px;height:2.8px;background:#f0c040;border-radius:50%"></div><div class="a" style="left:0.0px;top:18.0px;width:18.0px;height:15.0px;background:#ececec;border-radius:30% 30% 0 0"></div><div class="a" style="left:14.0px;top:5.0px;width:14.0px;height:17.0px;background:#2a1a14;border-radius:50%"></div><div class="a" style="left:16.0px;top:7.0px;width:11.0px;height:15.0px;background:#a86e4e;border-radius:50%"></div><div class="a" style="left:26.0px;top:4.0px;width:12.0px;height:14.0px;background:#1e1410;border-radius:50%"></div><div class="a" style="left:28.0px;top:7.0px;width:8.0px;height:11.0px;background:#6a4230;border-radius:50%"></div><div class="a" style="left:22.0px;top:17.0px;width:14.0px;height:16.0px;background:#1e1410;border-radius:50%"></div><div class="a" style="left:24.0px;top:20.0px;width:10.0px;height:13.0px;background:#c48a68;border-radius:50%"></div><div class="a" style="left:35.0px;top:8.0px;width:12.0px;height:17.0px;background:#2a1c16;border-radius:50%"></div><div class="a" style="left:37.0px;top:11.0px;width:8.0px;height:12.0px;background:#b07c60;border-radius:50%"></div><div class="a" style="left:44.0px;top:4.0px;width:15.0px;height:20.0px;background:#2a1a12;border-radius:50%"></div><div class="a" style="left:46.0px;top:8.0px;width:10.0px;height:13.0px;background:#b8805e;border-radius:50%"></div><div class="a" style="left:37.0px;top:23.0px;width:18.0px;height:10.0px;background:#c23434;border-radius:30% 30% 0 0"></div><div class="dur"><span style="opacity:.4">0:02</span></div></div>
<div class="tl" style="left:119.5px;top:350.9px">Social Post</div>
<div class="th" style="left:55.2px;top:364px;width:59px"><div class="a" style="left:0.0px;top:0.0px;width:59.0px;height:33.0px;background:#f7f6f4;"></div><div class="a" style="left:8.8px;top:21.6px;width:1.8px;height:1.5px;background:#9aaac0;border-radius:50%"></div><div class="a" style="left:8.0px;top:10.9px;width:3.4px;height:2.9px;background:#c8d2de;border-radius:50%"></div><div class="a" style="left:9.7px;top:16.6px;width:1.8px;height:1.5px;background:#9aaac0;border-radius:50%"></div><div class="a" style="left:4.8px;top:19.6px;width:2.7px;height:2.3px;background:#c8d2de;border-radius:50%"></div><div class="a" style="left:20.2px;top:12.4px;width:2.6px;height:2.2px;background:#9aaac0;border-radius:50%"></div><div class="a" style="left:5.6px;top:6.3px;width:1.7px;height:1.4px;background:#c8d2de;border-radius:50%"></div><div class="a" style="left:4.7px;top:12.6px;width:2.8px;height:2.4px;background:#9aaac0;border-radius:50%"></div><div class="a" style="left:20.7px;top:18.0px;width:3.2px;height:2.7px;background:#c8d2de;border-radius:50%"></div><div class="a" style="left:20.6px;top:0.2px;width:3.4px;height:2.9px;background:#9aaac0;border-radius:50%"></div><div class="a" style="left:13.9px;top:12.2px;width:1.8px;height:1.5px;background:#c8d2de;border-radius:50%"></div><div class="a" style="left:4.3px;top:1.8px;width:1.8px;height:1.5px;background:#9aaac0;border-radius:50%"></div><div class="a" style="left:22.0px;top:10.5px;width:3.2px;height:2.7px;background:#c8d2de;border-radius:50%"></div><div class="a" style="left:27.6px;top:17.4px;width:2.0px;height:1.7px;background:#9aaac0;border-radius:50%"></div><div class="a" style="left:4.5px;top:27.0px;width:2.6px;height:2.2px;background:#c8d2de;border-radius:50%"></div><div class="a" style="left:9.4px;top:26.8px;width:1.9px;height:1.6px;background:#9aaac0;border-radius:50%"></div><div class="a" style="left:24.6px;top:0.3px;width:2.5px;height:2.1px;background:#c8d2de;border-radius:50%"></div><div class="a" style="left:9.4px;top:27.3px;width:2.5px;height:2.1px;background:#9aaac0;border-radius:50%"></div><div class="a" style="left:15.9px;top:22.6px;width:2.9px;height:2.4px;background:#c8d2de;border-radius:50%"></div><div class="a" style="left:23.3px;top:22.9px;width:1.7px;height:1.5px;background:#9aaac0;border-radius:50%"></div><div class="a" style="left:3.9px;top:11.4px;width:2.4px;height:2.0px;background:#c8d2de;border-radius:50%"></div><div class="a" style="left:12.0px;top:1.0px;width:6.0px;height:4.0px;background:#233a5c;border-radius:50%"></div><div class="a" style="left:3.0px;top:7.0px;width:4.0px;height:3.0px;background:#f4b48f;border-radius:50%"></div><div class="a" style="left:5.0px;top:10.0px;width:4.0px;height:4.0px;background:#e8645b;border-radius:50%"></div><div class="a" style="left:22.0px;top:5.0px;width:4.0px;height:4.0px;background:#e8645b;border-radius:50%"></div><div class="a" style="left:20.0px;top:14.0px;width:6.0px;height:5.0px;background:#233a5c;border-radius:50%"></div><div class="a" style="left:0.0px;top:16.0px;width:3.0px;height:5.0px;background:#e8b23a;border-radius:50%"></div><div class="a" style="left:10.0px;top:23.0px;width:4.0px;height:4.0px;background:#e8645b;border-radius:50%"></div><div class="a" style="left:22.0px;top:25.0px;width:5.0px;height:5.0px;background:#e8b23a;border-radius:50%"></div><div class="a" style="left:17.0px;top:29.0px;width:4.0px;height:3.0px;background:#f4b48f;border-radius:50%"></div><div class="a" style="left:23.0px;top:10.0px;width:3.0px;height:3.0px;background:#f4b48f;border-radius:50%"></div><div class="a" style="left:33.0px;top:0.0px;width:26.0px;height:33.0px;background:#f8f7f5;"></div><div class="a" style="left:36.0px;top:12.0px;width:25.0px;height:15.0px;background:#f8cdb5;"></div><div class="a" style="left:41.0px;top:8.0px;width:15.0px;height:24.0px;background:#e9e6e2;border-radius:1px"></div><div class="a" style="left:45.1px;top:11.4px;width:2.3px;height:1.9px;background:#233a5c;border-radius:50%"></div><div class="a" style="left:50.0px;top:8.6px;width:2.2px;height:1.9px;background:#e8645b;border-radius:50%"></div><div class="a" style="left:50.6px;top:23.4px;width:1.2px;height:1.0px;background:#9aaac0;border-radius:50%"></div><div class="a" style="left:50.8px;top:7.3px;width:2.2px;height:1.8px;background:#233a5c;border-radius:50%"></div><div class="a" style="left:42.7px;top:16.1px;width:1.7px;height:1.4px;background:#e8645b;border-radius:50%"></div><div class="a" style="left:47.9px;top:21.5px;width:2.2px;height:1.9px;background:#9aaac0;border-radius:50%"></div><div class="a" style="left:49.3px;top:24.5px;width:1.9px;height:1.7px;background:#233a5c;border-radius:50%"></div><div class="a" style="left:46.3px;top:21.9px;width:1.9px;height:1.7px;background:#e8645b;border-radius:50%"></div><div class="a" style="left:49.0px;top:10.7px;width:2.3px;height:2.0px;background:#9aaac0;border-radius:50%"></div><div class="a" style="left:49.9px;top:5.5px;width:2.2px;height:1.8px;background:#233a5c;border-radius:50%"></div><div class="a" style="left:46.5px;top:16.9px;width:2.2px;height:1.8px;background:#e8645b;border-radius:50%"></div><div class="a" style="left:47.7px;top:18.7px;width:2.3px;height:1.9px;background:#9aaac0;border-radius:50%"></div><div class="a" style="left:42.5px;top:1.9px;width:1.5px;height:1.3px;background:#233a5c;border-radius:50%"></div><div class="a" style="left:44.6px;top:3.7px;width:1.3px;height:1.1px;background:#e8645b;border-radius:50%"></div><div class="a" style="left:43.0px;top:12.0px;width:11.0px;height:12.0px;background:#e8645b;"></div><div class="a" style="left:46.0px;top:15.0px;width:5.0px;height:4.0px;background:#f2e0d0;border-radius:50%"></div><div class="a" style="left:41.0px;top:2.0px;width:12.0px;height:1.3px;background:#9a9aa8;"></div></div>
<div class="tl" style="left:55.2px;top:399.5px">Packaging-01</div>
<div class="th" style="left:119.5px;top:364px;width:58.5px"><div class="a" style="left:0.0px;top:0.0px;width:58.5px;height:33.0px;background:#f7f6f4;"></div><div class="a" style="left:27.7px;top:0.8px;width:3.2px;height:2.7px;background:#9aaac0;border-radius:50%"></div><div class="a" style="left:9.5px;top:19.5px;width:1.6px;height:1.4px;background:#c8d2de;border-radius:50%"></div><div class="a" style="left:14.4px;top:15.7px;width:3.0px;height:2.5px;background:#f4c8a8;border-radius:50%"></div><div class="a" style="left:48.1px;top:11.5px;width:2.1px;height:1.8px;background:#9aaac0;border-radius:50%"></div><div class="a" style="left:18.6px;top:20.8px;width:3.2px;height:2.7px;background:#c8d2de;border-radius:50%"></div><div class="a" style="left:9.9px;top:20.5px;width:2.3px;height:2.0px;background:#f4c8a8;border-radius:50%"></div><div class="a" style="left:12.0px;top:20.9px;width:2.1px;height:1.8px;background:#9aaac0;border-radius:50%"></div><div class="a" style="left:28.9px;top:7.3px;width:2.1px;height:1.8px;background:#c8d2de;border-radius:50%"></div><div class="a" style="left:8.8px;top:23.6px;width:3.2px;height:2.7px;background:#f4c8a8;border-radius:50%"></div><div class="a" style="left:40.3px;top:18.6px;width:2.7px;height:2.3px;background:#9aaac0;border-radius:50%"></div><div class="a" style="left:28.7px;top:17.8px;width:2.5px;height:2.1px;background:#c8d2de;border-radius:50%"></div><div class="a" style="left:5.4px;top:8.0px;width:2.2px;height:1.9px;background:#f4c8a8;border-radius:50%"></div><div class="a" style="left:33.5px;top:23.6px;width:2.5px;height:2.2px;background:#9aaac0;border-radius:50%"></div><div class="a" style="left:21.3px;top:10.1px;width:2.8px;height:2.3px;background:#c8d2de;border-radius:50%"></div><div class="a" style="left:36.8px;top:14.7px;width:2.1px;height:1.8px;background:#f4c8a8;border-radius:50%"></div><div class="a" style="left:44.5px;top:1.3px;width:2.2px;height:1.9px;background:#9aaac0;border-radius:50%"></div><div class="a" style="left:0.8px;top:7.5px;width:2.8px;height:2.4px;background:#c8d2de;border-radius:50%"></div><div class="a" style="left:34.9px;top:8.9px;width:2.3px;height:1.9px;background:#f4c8a8;border-radius:50%"></div><div class="a" style="left:32.5px;top:19.4px;width:1.7px;height:1.4px;background:#9aaac0;border-radius:50%"></div><div class="a" style="left:37.6px;top:13.2px;width:2.5px;height:2.1px;background:#c8d2de;border-radius:50%"></div><div class="a" style="left:28.1px;top:5.1px;width:2.7px;height:2.3px;background:#f4c8a8;border-radius:50%"></div><div class="a" style="left:7.4px;top:19.4px;width:3.5px;height:3.0px;background:#9aaac0;border-radius:50%"></div><div class="a" style="left:33.6px;top:10.7px;width:3.2px;height:2.7px;background:#c8d2de;border-radius:50%"></div><div class="a" style="left:48.7px;top:22.9px;width:2.9px;height:2.4px;background:#f4c8a8;border-radius:50%"></div><div class="a" style="left:18.4px;top:8.4px;width:3.5px;height:3.0px;background:#9aaac0;border-radius:50%"></div><div class="a" style="left:20.1px;top:7.5px;width:3.0px;height:2.5px;background:#c8d2de;border-radius:50%"></div><div class="a" style="left:11.0px;top:0.0px;width:8.0px;height:5.0px;background:#233a5c;border-radius:0 0 50% 50%"></div><div class="a" style="left:0.0px;top:5.0px;width:6.0px;height:8.0px;background:#e8645b;border-radius:50%"></div><div class="a" style="left:25.0px;top:4.0px;width:7.0px;height:6.0px;background:#f4b48f;border-radius:50%"></div><div class="a" style="left:33.0px;top:0.0px;width:7.0px;height:5.0px;background:#233a5c;border-radius:0 0 50% 50%"></div><div class="a" style="left:46.0px;top:4.0px;width:7.0px;height:7.0px;background:#e8645b;border-radius:50%"></div><div class="a" style="left:53.0px;top:0.0px;width:6.0px;height:4.0px;background:#233a5c;border-radius:50%"></div><div class="a" style="left:24.0px;top:14.0px;width:6.0px;height:6.0px;background:#e8645b;border-radius:50%"></div><div class="a" style="left:45.0px;top:14.0px;width:7.0px;height:6.0px;background:#f4b48f;border-radius:50%"></div><div class="a" style="left:0.0px;top:20.0px;width:8.0px;height:10.0px;background:#233a5c;border-radius:50%"></div><div class="a" style="left:12.0px;top:22.0px;width:8.0px;height:8.0px;background:#eab02c;border-radius:50%"></div><div class="a" style="left:47.0px;top:21.0px;width:8.0px;height:9.0px;background:#233a5c;border-radius:50%"></div><div class="a" style="left:30.0px;top:28.0px;width:7.0px;height:5.0px;background:#e8645b;border-radius:50%"></div><div class="a" style="left:38.0px;top:20.0px;width:3.0px;height:5.0px;background:#7a8aa0;border-radius:50%"></div></div>
<div class="tl" style="left:119.5px;top:399.5px">Pattern - Citrus Blast</div>
<!--MEDIA_THUMBS_END-->

<!-- main -->
<div class="a" style="left:189px;top:22px;width:737px;height:558px;background:#1a1a25"></div>
<svg width="0" height="0" style="position:absolute"><defs>
<symbol id="logo" viewBox="0 0 210 170">
<path d="M87.0 83.6 C76.7 68.7 61.6 59.2 47.0 56.8 C38.2 55.7 31.7 60.5 32.0 65.0 C29.0 68.4 31.3 76.2 39.0 80.7 C51.9 87.6 69.8 89.2 87.0 83.6Z" fill="#f8d2bf"/><path d="M92.4 69.6 C87.9 50.3 76.3 35.8 62.5 29.5 C54.0 26.1 45.5 29.8 44.0 35.0 C39.6 38.1 38.8 47.3 44.8 54.3 C55.2 65.3 72.7 71.6 92.4 69.6Z" fill="#f8d2bf"/><path d="M84.0 92.0 C71.5 78.6 54.4 70.2 38.9 68.5 C29.5 67.8 23.2 72.4 24.0 76.6 C21.2 79.9 24.5 87.0 33.1 90.9 C47.6 96.8 66.5 97.7 84.0 92.0Z" fill="#e1a92c"/><path d="M84.0 100.0 C65.0 100.1 48.1 107.6 38.0 118.9 C32.1 126.0 32.8 134.5 37.0 137.0 C38.4 141.7 46.6 144.3 54.8 140.3 C68.2 133.1 79.5 118.4 84.0 100.0Z" fill="#e1a92c"/><path d="M75 54 L113 48 L128 81 L107 105 L75 94 Z" fill="#d3d3df"/><path d="M123.0 92.0 C134.4 110.9 152.0 123.3 169.3 126.7 C179.9 128.4 188.1 122.7 188.0 117.0 C191.8 112.8 189.6 103.1 180.7 97.3 C165.5 88.2 144.1 85.6 123.0 92.0Z" fill="#f5b894"/><path d="M120.0 97.5 C114.8 120.1 118.6 142.9 128.7 159.2 C135.1 168.7 145.0 171.1 149.0 167.0 C154.7 167.1 160.0 158.3 157.7 147.0 C153.3 128.5 139.7 109.7 120.0 97.5Z" fill="#f5b894"/><path d="M99.0 94.0 C82.7 107.8 74.0 126.3 73.9 143.1 C74.3 153.3 81.5 160.0 87.0 159.0 C91.8 161.9 100.9 158.2 104.9 148.9 C110.8 133.2 109.3 112.7 99.0 94.0Z" fill="#69b2cb"/><path d="M103.0 94.0 C93.6 112.5 93.0 132.0 99.7 146.6 C104.1 155.2 113.4 158.1 118.0 155.0 C123.5 155.6 130.4 148.7 130.3 139.0 C129.5 123.1 119.9 106.0 103.0 94.0Z" fill="#69b2cb"/><path d="M102.0 55.0 C107.1 38.1 104.4 22.2 96.3 11.9 C91.0 5.9 82.5 5.5 79.0 9.0 C74.1 9.7 69.3 16.7 70.9 24.5 C74.3 37.2 85.4 48.9 102.0 55.0Z" fill="#557698"/><path d="M105.0 53.0 C120.5 51.5 132.9 44.1 139.1 34.0 C142.5 27.7 140.4 20.7 136.5 19.0 C134.5 15.2 127.3 13.7 121.3 17.6 C111.8 24.5 105.3 37.5 105.0 53.0Z" fill="#557698"/><path d="M113.0 69.0 C127.9 65.7 139.4 56.9 144.6 46.4 C147.5 39.8 144.9 33.2 141.0 32.0 C138.8 28.6 131.7 27.9 126.2 32.4 C117.4 40.4 112.1 53.8 113.0 69.0Z" fill="#f2ca62"/><path d="M121.0 77.0 C139.3 85.1 157.4 84.2 169.9 76.3 C177.1 71.1 178.5 61.5 175.0 57.0 C174.7 51.3 167.5 44.9 158.5 45.7 C144.0 47.8 129.7 58.9 121.0 77.0Z" fill="#f2ca62"/>
<text x="4.5" y="108.5" font-family="Liberation Sans" font-size="58" fill="#233a5c" stroke="#233a5c" stroke-width="1.5" textLength="198.5" lengthAdjust="spacingAndGlyphs">FruiTea</text>
</symbol>
</defs></svg>

<!-- breadcrumb -->
<div class="a" style="left:198.5px;top:29px;font-size:7.5px;color:#9c9ca6;line-height:9px">Personal</div>
<svg style="left:236.5px;top:30.5px" width="5" height="7"><path d="M0.8 0.8L3.8 3.5L0.8 6.2" fill="none" stroke="#a0a0aa" stroke-width="0.8"/></svg>
<div class="a" style="left:244.5px;top:24.5px;width:38.5px;height:20px;border-radius:2px;background:#25252f"></div>
<div class="a" style="left:251.5px;top:29px;font-size:7.2px;color:#e8e8ee;line-height:9px">FruiTea</div>
<div class="a" style="left:289.5px;top:30.5px;width:1px;height:1px;background:#9a9aa3;box-shadow:0 2.2px 0 #9a9aa3,0 4.4px 0 #9a9aa3"></div>
<svg style="left:302px;top:28px" width="12" height="10"><path d="M3 7.5a2.5 2.5 0 0 1-0.3-5a3.3 3.3 0 0 1 6.3 0.6a2 2 0 0 1 0.5 3.9" fill="none" stroke="#e0e0e6" stroke-width="0.9"/><circle cx="8" cy="7" r="2.4" fill="#d8d8de"/><path d="M6.9 7L7.7 7.8L9.1 6.3" fill="none" stroke="#1b1b26" stroke-width="0.6"/></svg>

<!-- export -->
<div class="a" style="left:865px;top:27.5px;width:56px;height:20px;border-radius:3px;background:#5b4fd9"></div>
<div class="a" style="left:876.5px;top:32.5px;font-size:8px;color:#f4f4fb;line-height:10px">Export</div>
<svg style="left:904.5px;top:36px" width="6" height="4"><path d="M0.6 0.6L3 3L5.4 0.6" fill="none" stroke="#e8e8f5" stroke-width="0.9"/></svg>
<div class="a" style="left:897px;top:57.5px;width:23px;height:15px;border:1px solid #50505a;border-radius:2px"></div>
<div class="a" style="left:897px;top:61px;width:23px;text-align:center;font-family:'Liberation Mono',monospace;font-weight:bold;font-size:6.8px;color:#e6e6ea;line-height:8px">16:9</div>

<!-- preview -->
<div class="a" style="left:285px;top:63px;width:294px;height:328px;background:#f2c765"></div>
<div class="a" style="left:579px;top:63px;width:287.5px;height:328px;background:#ffffff"></div>
<svg style="left:620px;top:135px" width="210" height="170"><use href="#logo"/></svg>

<!-- cup -->
<svg style="left:0;top:0" width="966" height="610">
<defs>
<clipPath id="cupc"><path d="M322 118.5Q322 117.5 324 117.5H518Q520 117.5 520 119V125.5H512L490.5 348Q490 353.5 484 354Q421 357 358 354Q352 353.5 351.5 348L330 125.5H322Z"/></clipPath>
<linearGradient id="cupg" x1="0" x2="1"><stop offset="0" stop-color="#081528" stop-opacity=".6"/><stop offset=".15" stop-color="#081528" stop-opacity=".1"/><stop offset=".5" stop-color="#000" stop-opacity="0"/><stop offset=".82" stop-color="#081528" stop-opacity=".15"/><stop offset="1" stop-color="#081528" stop-opacity=".6"/></linearGradient>
<linearGradient id="labg" x1="0" x2="1"><stop offset="0" stop-color="#e4e4e4"/><stop offset=".25" stop-color="#f2f2f2"/><stop offset=".65" stop-color="#e8e8e8"/><stop offset="1" stop-color="#bfbfbf"/></linearGradient>
</defs>
<g clip-path="url(#cupc)">
<rect x="300" y="110" width="240" height="250" fill="#203656"/>
<ellipse cx="333" cy="128" rx="13" ry="13" fill="#cf4c45"/><ellipse cx="513" cy="131" rx="12" ry="15" fill="#cf4c45"/><g fill="none" stroke="#5aa3ba" stroke-width="0.9"><circle cx="368.0" cy="118.0" r="5.4"/><circle cx="373.7" cy="122.1" r="5.4"/><circle cx="371.5" cy="128.9" r="5.4"/><circle cx="364.5" cy="128.9" r="5.4"/><circle cx="362.3" cy="122.1" r="5.4"/></g><g stroke="#5aa3ba" stroke-width="0.7"><path d="M368 124L372.2 124.0"/><path d="M368 124L371.4 126.5"/><path d="M368 124L369.3 128.0"/><path d="M368 124L366.7 128.0"/><path d="M368 124L364.6 126.5"/><path d="M368 124L363.8 124.0"/><path d="M368 124L364.6 121.5"/><path d="M368 124L366.7 120.0"/><path d="M368 124L369.3 120.0"/><path d="M368 124L371.4 121.5"/></g><g transform="rotate(-8 405.7 122)" fill="#e2aa2a"><ellipse cx="405.7" cy="122" rx="15.0" ry="5.333333333333333"/><ellipse cx="394.4" cy="118.0" rx="3.0" ry="4.6" transform="rotate(-20 394.4 118.0)"/><ellipse cx="401.9" cy="118.0" rx="3.0" ry="4.6" transform="rotate(-8 401.9 118.0)"/><ellipse cx="409.4" cy="118.0" rx="3.0" ry="4.6" transform="rotate(4 409.4 118.0)"/><ellipse cx="416.9" cy="118.0" rx="3.0" ry="4.6" transform="rotate(16 416.9 118.0)"/></g><g fill="none" stroke="#7cc3cc" stroke-width="0.8"><ellipse cx="451.5" cy="121.5" rx="4.5" ry="1.7" transform="rotate(0 451.5 121.5)"/><ellipse cx="449.9" cy="125.4" rx="4.5" ry="1.7" transform="rotate(45 449.9 125.4)"/><ellipse cx="446.0" cy="127.0" rx="4.5" ry="1.7" transform="rotate(90 446.0 127.0)"/><ellipse cx="442.1" cy="125.4" rx="4.5" ry="1.7" transform="rotate(135 442.1 125.4)"/><ellipse cx="440.5" cy="121.5" rx="4.5" ry="1.7" transform="rotate(180 440.5 121.5)"/><ellipse cx="442.1" cy="117.6" rx="4.5" ry="1.7" transform="rotate(225 442.1 117.6)"/><ellipse cx="446.0" cy="116.0" rx="4.5" ry="1.7" transform="rotate(270 446.0 116.0)"/><ellipse cx="449.9" cy="117.6" rx="4.5" ry="1.7" transform="rotate(315 449.9 117.6)"/><circle cx="446" cy="121.5" r="1.5"/></g><g transform="rotate(-60 473.4 125)"><ellipse cx="473.4" cy="125" rx="4.5" ry="7.5" fill="#eab08e"/><path d="M471.4 116.0L473.4 118.5L475.4 116.0" fill="none" stroke="#eab08e" stroke-width="0.9"/><g fill="#b57e66"><circle cx="474.4" cy="124" r="0.4"/><circle cx="475.2" cy="126" r="0.4"/><circle cx="474.0" cy="127.5" r="0.4"/></g></g><g transform="rotate(10 489.4 124)"><ellipse cx="489.4" cy="124" rx="4.5" ry="7.5" fill="#eab08e"/><path d="M487.4 115.0L489.4 117.5L491.4 115.0" fill="none" stroke="#eab08e" stroke-width="0.9"/><g fill="#b57e66"><circle cx="490.4" cy="123" r="0.4"/><circle cx="491.2" cy="125" r="0.4"/><circle cx="490.0" cy="126.5" r="0.4"/></g></g><circle cx="346" cy="150" r="2.6" fill="#f1c3a4"/><circle cx="345.7" cy="149.7" r="0.7" fill="#6a4a4a"/><circle cx="353" cy="146" r="2.6" fill="#f1c3a4"/><circle cx="352.7" cy="145.7" r="0.7" fill="#6a4a4a"/><circle cx="361" cy="149" r="2.6" fill="#f1c3a4"/><circle cx="360.7" cy="148.7" r="0.7" fill="#6a4a4a"/><circle cx="369" cy="146" r="2.6" fill="#f1c3a4"/><circle cx="368.7" cy="145.7" r="0.7" fill="#6a4a4a"/><circle cx="377" cy="152" r="2.6" fill="#f1c3a4"/><circle cx="376.7" cy="151.7" r="0.7" fill="#6a4a4a"/><circle cx="348" cy="158" r="2.6" fill="#f1c3a4"/><circle cx="347.7" cy="157.7" r="0.7" fill="#6a4a4a"/><circle cx="356" cy="157" r="2.6" fill="#f1c3a4"/><circle cx="355.7" cy="156.7" r="0.7" fill="#6a4a4a"/><circle cx="364" cy="156" r="2.6" fill="#f1c3a4"/><circle cx="363.7" cy="155.7" r="0.7" fill="#6a4a4a"/><circle cx="372" cy="160" r="2.6" fill="#f1c3a4"/><circle cx="371.7" cy="159.7" r="0.7" fill="#6a4a4a"/><circle cx="354" cy="166" r="2.6" fill="#f1c3a4"/><circle cx="353.7" cy="165.7" r="0.7" fill="#6a4a4a"/><circle cx="363" cy="165" r="2.6" fill="#f1c3a4"/><circle cx="362.7" cy="164.7" r="0.7" fill="#6a4a4a"/><path d="M389.6 142.5Q394.6 149 389.6 155.5Q384.6 149 389.6 142.5Z" fill="#e9c05a" transform="rotate(20 389.6 149)"/><g transform="rotate(-20 410 150)"><ellipse cx="410" cy="150" rx="5" ry="8" fill="#eab08e"/><path d="M408 140.5L410 143L412 140.5" fill="none" stroke="#eab08e" stroke-width="0.9"/><g fill="#b57e66"><circle cx="411" cy="149" r="0.4"/><circle cx="411.8" cy="151" r="0.4"/><circle cx="410.6" cy="152.5" r="0.4"/></g></g><g transform="rotate(10 426 160.5)"><ellipse cx="426" cy="160.5" rx="5" ry="8" fill="#eab08e"/><path d="M424 151.0L426 153.5L428 151.0" fill="none" stroke="#eab08e" stroke-width="0.9"/><g fill="#b57e66"><circle cx="427" cy="159.5" r="0.4"/><circle cx="427.8" cy="161.5" r="0.4"/><circle cx="426.6" cy="163.0" r="0.4"/></g></g><g transform="rotate(-80 411.4 168.5)"><ellipse cx="411.4" cy="168.5" rx="5" ry="8" fill="#eab08e"/><path d="M409.4 159.0L411.4 161.5L413.4 159.0" fill="none" stroke="#eab08e" stroke-width="0.9"/><g fill="#b57e66"><circle cx="412.4" cy="167.5" r="0.4"/><circle cx="413.2" cy="169.5" r="0.4"/><circle cx="412.0" cy="171.0" r="0.4"/></g></g><path d="M426.3 129.0Q431.3 135 426.3 141.0Q421.3 135 426.3 129.0Z" fill="#7ec6cc" transform="rotate(-60 426.3 135)"/><path d="M445.8 141.5Q451.8 149 445.8 156.5Q439.8 149 445.8 141.5Z" fill="#e9c05a" transform="rotate(35 445.8 149)"/><path d="M460.7 137.7Q466.7 146.7 460.7 155.7Q454.7 146.7 460.7 137.7Z" fill="none" stroke="#7ec6cc" stroke-width="0.8" transform="rotate(25 460.7 146.7)"/><path d="M460.7 137.7V155.7" stroke="#7ec6cc" stroke-width="0.6" transform="rotate(25 460.7 146.7)"/><g fill="none" stroke="#5aa3ba" stroke-width="0.9"><circle cx="490.6" cy="147.1" r="5.9"/><circle cx="496.8" cy="151.6" r="5.9"/><circle cx="494.4" cy="158.9" r="5.9"/><circle cx="486.8" cy="158.9" r="5.9"/><circle cx="484.4" cy="151.6" r="5.9"/></g><g stroke="#5aa3ba" stroke-width="0.7"><path d="M490.6 153.6L495.2 153.6"/><path d="M490.6 153.6L494.3 156.3"/><path d="M490.6 153.6L492.0 157.9"/><path d="M490.6 153.6L489.2 157.9"/><path d="M490.6 153.6L486.9 156.3"/><path d="M490.6 153.6L486.1 153.6"/><path d="M490.6 153.6L486.9 150.9"/><path d="M490.6 153.6L489.2 149.3"/><path d="M490.6 153.6L492.0 149.3"/><path d="M490.6 153.6L494.3 150.9"/></g><path d="M385 160.9Q390 167.4 385 173.9Q380 167.4 385 160.9Z" fill="#7ec6cc" transform="rotate(60 385 167.4)"/><circle cx="459" cy="167" r="2.6" fill="#f1c3a4"/><circle cx="458.7" cy="166.7" r="0.7" fill="#6a4a4a"/><circle cx="472" cy="169" r="2.6" fill="#f1c3a4"/><circle cx="471.7" cy="168.7" r="0.7" fill="#6a4a4a"/><circle cx="458" cy="175" r="2.6" fill="#f1c3a4"/><circle cx="457.7" cy="174.7" r="0.7" fill="#6a4a4a"/><circle cx="466" cy="176" r="2.6" fill="#f1c3a4"/><circle cx="465.7" cy="175.7" r="0.7" fill="#6a4a4a"/><circle cx="474" cy="175" r="2.6" fill="#f1c3a4"/><circle cx="473.7" cy="174.7" r="0.7" fill="#6a4a4a"/><circle cx="484" cy="176" r="2.6" fill="#f1c3a4"/><circle cx="483.7" cy="175.7" r="0.7" fill="#6a4a4a"/><ellipse cx="340.0" cy="172.1" rx="2.9" ry="4.5" transform="rotate(0 340.0 172.1)" fill="#e9c05a"/><ellipse cx="344.7" cy="175.5" rx="2.9" ry="4.5" transform="rotate(72 344.7 175.5)" fill="#e9c05a"/><ellipse cx="342.9" cy="181.0" rx="2.9" ry="4.5" transform="rotate(144 342.9 181.0)" fill="#e9c05a"/><ellipse cx="337.1" cy="181.0" rx="2.9" ry="4.5" transform="rotate(216 337.1 181.0)" fill="#e9c05a"/><ellipse cx="335.3" cy="175.5" rx="2.9" ry="4.5" transform="rotate(288 335.3 175.5)" fill="#e9c05a"/><circle cx="340" cy="177" r="1.6" fill="#9a7a3a"/><path d="M349 210.0Q355 218 349 226.0Q343 218 349 210.0Z" fill="none" stroke="#7ec6cc" stroke-width="0.8" transform="rotate(60 349 218)"/><path d="M349 210.0V226.0" stroke="#7ec6cc" stroke-width="0.6" transform="rotate(60 349 218)"/><g transform="rotate(80 491.7 206.4)" fill="#e2aa2a"><ellipse cx="491.7" cy="206.4" rx="7.0" ry="8.0"/><ellipse cx="486.4" cy="200.4" rx="1.4" ry="6.9" transform="rotate(-20 486.4 200.4)"/><ellipse cx="489.9" cy="200.4" rx="1.4" ry="6.9" transform="rotate(-8 489.9 200.4)"/><ellipse cx="493.4" cy="200.4" rx="1.4" ry="6.9" transform="rotate(4 493.4 200.4)"/><ellipse cx="496.9" cy="200.4" rx="1.4" ry="6.9" transform="rotate(16 496.9 200.4)"/></g><path d="M501 174.0Q506 181 501 188.0Q496 181 501 174.0Z" fill="#e9c05a" transform="rotate(-30 501 181)"/><path d="M498.6 222.0Q504.6 229 498.6 236.0Q492.6 229 498.6 222.0Z" fill="#e9c05a" transform="rotate(20 498.6 229)"/><path d="M489.4 231.5Q494.4 238.5 489.4 245.5Q484.4 238.5 489.4 231.5Z" fill="#7ec6cc" transform="rotate(-60 489.4 238.5)"/><g transform="rotate(20 337 196)"><ellipse cx="337" cy="196" rx="4" ry="7" fill="#eab08e"/><path d="M335 187.5L337 190L339 187.5" fill="none" stroke="#eab08e" stroke-width="0.9"/><g fill="#b57e66"><circle cx="338" cy="195" r="0.4"/><circle cx="338.8" cy="197" r="0.4"/><circle cx="337.6" cy="198.5" r="0.4"/></g></g><ellipse cx="352.0" cy="245.6" rx="2.9" ry="4.5" transform="rotate(0 352.0 245.6)" fill="#e9c05a"/><ellipse cx="356.7" cy="249.0" rx="2.9" ry="4.5" transform="rotate(72 356.7 249.0)" fill="#e9c05a"/><ellipse cx="354.9" cy="254.5" rx="2.9" ry="4.5" transform="rotate(144 354.9 254.5)" fill="#e9c05a"/><ellipse cx="349.1" cy="254.5" rx="2.9" ry="4.5" transform="rotate(216 349.1 254.5)" fill="#e9c05a"/><ellipse cx="347.3" cy="249.0" rx="2.9" ry="4.5" transform="rotate(288 347.3 249.0)" fill="#e9c05a"/><circle cx="352" cy="250.5" r="1.6" fill="#9a7a3a"/><ellipse cx="370.0" cy="243.2" rx="2.2" ry="3.5" transform="rotate(0 370.0 243.2)" fill="#e9c05a"/><ellipse cx="373.7" cy="245.8" rx="2.2" ry="3.5" transform="rotate(72 373.7 245.8)" fill="#e9c05a"/><ellipse cx="372.3" cy="250.1" rx="2.2" ry="3.5" transform="rotate(144 372.3 250.1)" fill="#e9c05a"/><ellipse cx="367.7" cy="250.1" rx="2.2" ry="3.5" transform="rotate(216 367.7 250.1)" fill="#e9c05a"/><ellipse cx="366.3" cy="245.8" rx="2.2" ry="3.5" transform="rotate(288 366.3 245.8)" fill="#e9c05a"/><circle cx="370" cy="247" r="1.3" fill="#9a7a3a"/><circle cx="393" cy="246" r="2.6" fill="#f1c3a4"/><circle cx="392.7" cy="245.7" r="0.7" fill="#6a4a4a"/><circle cx="407" cy="246" r="2.6" fill="#f1c3a4"/><circle cx="406.7" cy="245.7" r="0.7" fill="#6a4a4a"/><path d="M407 253.5Q412 261 407 268.5Q402 261 407 253.5Z" fill="none" stroke="#7ec6cc" stroke-width="0.8" transform="rotate(70 407 261)"/><path d="M407 253.5V268.5" stroke="#7ec6cc" stroke-width="0.6" transform="rotate(70 407 261)"/><path d="M423 243.0Q429 252 423 261.0Q417 252 423 243.0Z" fill="none" stroke="#7ec6cc" stroke-width="0.8" transform="rotate(35 423 252)"/><path d="M423 243.0V261.0" stroke="#7ec6cc" stroke-width="0.6" transform="rotate(35 423 252)"/><path d="M458 243.5Q461.5 248 458 252.5Q454.5 248 458 243.5Z" fill="#2f9a4a" transform="rotate(10 458 248)"/><circle cx="472" cy="255" r="2.6" fill="#f1c3a4"/><circle cx="471.7" cy="254.7" r="0.7" fill="#6a4a4a"/><circle cx="480" cy="252" r="2.6" fill="#f1c3a4"/><circle cx="479.7" cy="251.7" r="0.7" fill="#6a4a4a"/><circle cx="490" cy="250" r="2.6" fill="#f1c3a4"/><circle cx="489.7" cy="249.7" r="0.7" fill="#6a4a4a"/><circle cx="478" cy="262" r="2.6" fill="#f1c3a4"/><circle cx="477.7" cy="261.7" r="0.7" fill="#6a4a4a"/><circle cx="487" cy="259" r="2.6" fill="#f1c3a4"/><circle cx="486.7" cy="258.7" r="0.7" fill="#6a4a4a"/><circle cx="495" cy="262" r="2.6" fill="#f1c3a4"/><circle cx="494.7" cy="261.7" r="0.7" fill="#6a4a4a"/><circle cx="471" cy="268" r="2.6" fill="#f1c3a4"/><circle cx="470.7" cy="267.7" r="0.7" fill="#6a4a4a"/><circle cx="485" cy="268" r="2.6" fill="#f1c3a4"/><circle cx="484.7" cy="267.7" r="0.7" fill="#6a4a4a"/><circle cx="494" cy="269" r="2.6" fill="#f1c3a4"/><circle cx="493.7" cy="268.7" r="0.7" fill="#6a4a4a"/><g fill="none" stroke="#7cc3cc" stroke-width="0.8"><ellipse cx="362.1" cy="285.0" rx="5.0" ry="1.9" transform="rotate(0 362.1 285.0)"/><ellipse cx="360.3" cy="289.3" rx="5.0" ry="1.9" transform="rotate(45 360.3 289.3)"/><ellipse cx="356.0" cy="291.1" rx="5.0" ry="1.9" transform="rotate(90 356.0 291.1)"/><ellipse cx="351.7" cy="289.3" rx="5.0" ry="1.9" transform="rotate(135 351.7 289.3)"/><ellipse cx="349.9" cy="285.0" rx="5.0" ry="1.9" transform="rotate(180 349.9 285.0)"/><ellipse cx="351.7" cy="280.7" rx="5.0" ry="1.9" transform="rotate(225 351.7 280.7)"/><ellipse cx="356.0" cy="278.9" rx="5.0" ry="1.9" transform="rotate(270 356.0 278.9)"/><ellipse cx="360.3" cy="280.7" rx="5.0" ry="1.9" transform="rotate(315 360.3 280.7)"/><circle cx="356" cy="285" r="1.6"/></g><g transform="rotate(-10 378 275)"><ellipse cx="378" cy="275" rx="5" ry="8" fill="#eab08e"/><path d="M376 265.5L378 268L380 265.5" fill="none" stroke="#eab08e" stroke-width="0.9"/><g fill="#b57e66"><circle cx="379" cy="274" r="0.4"/><circle cx="379.8" cy="276" r="0.4"/><circle cx="378.6" cy="277.5" r="0.4"/></g></g><g transform="rotate(-60 393 270)"><ellipse cx="393" cy="270" rx="5" ry="8" fill="#eab08e"/><path d="M391 260.5L393 263L395 260.5" fill="none" stroke="#eab08e" stroke-width="0.9"/><g fill="#b57e66"><circle cx="394" cy="269" r="0.4"/><circle cx="394.8" cy="271" r="0.4"/><circle cx="393.6" cy="272.5" r="0.4"/></g></g><g transform="rotate(-15 393 287)"><ellipse cx="393" cy="287" rx="5" ry="8" fill="#eab08e"/><path d="M391 277.5L393 280L395 277.5" fill="none" stroke="#eab08e" stroke-width="0.9"/><g fill="#b57e66"><circle cx="394" cy="286" r="0.4"/><circle cx="394.8" cy="288" r="0.4"/><circle cx="393.6" cy="289.5" r="0.4"/></g></g><ellipse cx="443.5" cy="264.5" rx="3.2" ry="5.0" transform="rotate(0 443.5 264.5)" fill="#e9c05a"/><ellipse cx="448.7" cy="268.3" rx="3.2" ry="5.0" transform="rotate(72 448.7 268.3)" fill="#e9c05a"/><ellipse cx="446.7" cy="274.4" rx="3.2" ry="5.0" transform="rotate(144 446.7 274.4)" fill="#e9c05a"/><ellipse cx="440.3" cy="274.4" rx="3.2" ry="5.0" transform="rotate(216 440.3 274.4)" fill="#e9c05a"/><ellipse cx="438.3" cy="268.3" rx="3.2" ry="5.0" transform="rotate(288 438.3 268.3)" fill="#e9c05a"/><circle cx="443.5" cy="270" r="1.8" fill="#9a7a3a"/><ellipse cx="427.0" cy="282.5" rx="3.2" ry="5.0" transform="rotate(0 427.0 282.5)" fill="#e9c05a"/><ellipse cx="432.2" cy="286.3" rx="3.2" ry="5.0" transform="rotate(72 432.2 286.3)" fill="#e9c05a"/><ellipse cx="430.2" cy="292.4" rx="3.2" ry="5.0" transform="rotate(144 430.2 292.4)" fill="#e9c05a"/><ellipse cx="423.8" cy="292.4" rx="3.2" ry="5.0" transform="rotate(216 423.8 292.4)" fill="#e9c05a"/><ellipse cx="421.8" cy="286.3" rx="3.2" ry="5.0" transform="rotate(288 421.8 286.3)" fill="#e9c05a"/><circle cx="427" cy="288" r="1.8" fill="#9a7a3a"/><ellipse cx="456.5" cy="284.5" rx="3.2" ry="5.0" transform="rotate(0 456.5 284.5)" fill="#e9c05a"/><ellipse cx="461.7" cy="288.3" rx="3.2" ry="5.0" transform="rotate(72 461.7 288.3)" fill="#e9c05a"/><ellipse cx="459.7" cy="294.4" rx="3.2" ry="5.0" transform="rotate(144 459.7 294.4)" fill="#e9c05a"/><ellipse cx="453.3" cy="294.4" rx="3.2" ry="5.0" transform="rotate(216 453.3 294.4)" fill="#e9c05a"/><ellipse cx="451.3" cy="288.3" rx="3.2" ry="5.0" transform="rotate(288 451.3 288.3)" fill="#e9c05a"/><circle cx="456.5" cy="290" r="1.8" fill="#9a7a3a"/><g fill="none" stroke="#5aa3ba" stroke-width="0.9"><circle cx="486.0" cy="284.5" r="5.0"/><circle cx="491.2" cy="288.3" r="5.0"/><circle cx="489.2" cy="294.4" r="5.0"/><circle cx="482.8" cy="294.4" r="5.0"/><circle cx="480.8" cy="288.3" r="5.0"/></g><g stroke="#5aa3ba" stroke-width="0.7"><path d="M486 290L489.9 290.0"/><path d="M486 290L489.1 292.3"/><path d="M486 290L487.2 293.7"/><path d="M486 290L484.8 293.7"/><path d="M486 290L482.9 292.3"/><path d="M486 290L482.1 290.0"/><path d="M486 290L482.9 287.7"/><path d="M486 290L484.8 286.3"/><path d="M486 290L487.2 286.3"/><path d="M486 290L489.1 287.7"/></g><g fill="none" stroke="#5aa3ba" stroke-width="0.9"><circle cx="369.0" cy="310.5" r="5.9"/><circle cx="375.2" cy="315.0" r="5.9"/><circle cx="372.8" cy="322.3" r="5.9"/><circle cx="365.2" cy="322.3" r="5.9"/><circle cx="362.8" cy="315.0" r="5.9"/></g><g stroke="#5aa3ba" stroke-width="0.7"><path d="M369 317L373.6 317.0"/><path d="M369 317L372.7 319.7"/><path d="M369 317L370.4 321.3"/><path d="M369 317L367.6 321.3"/><path d="M369 317L365.3 319.7"/><path d="M369 317L364.4 317.0"/><path d="M369 317L365.3 314.3"/><path d="M369 317L367.6 312.7"/><path d="M369 317L370.4 312.7"/><path d="M369 317L372.7 314.3"/></g><g transform="rotate(-25 407 315)" fill="#e2aa2a"><ellipse cx="407" cy="315" rx="15.0" ry="7.333333333333333"/><ellipse cx="395.8" cy="309.5" rx="3.0" ry="6.3" transform="rotate(-20 395.8 309.5)"/><ellipse cx="403.2" cy="309.5" rx="3.0" ry="6.3" transform="rotate(-8 403.2 309.5)"/><ellipse cx="410.8" cy="309.5" rx="3.0" ry="6.3" transform="rotate(4 410.8 309.5)"/><ellipse cx="418.2" cy="309.5" rx="3.0" ry="6.3" transform="rotate(16 418.2 309.5)"/></g><g fill="none" stroke="#7cc3cc" stroke-width="0.8"><ellipse cx="451.7" cy="316.0" rx="5.0" ry="1.9" transform="rotate(0 451.7 316.0)"/><ellipse cx="449.9" cy="320.3" rx="5.0" ry="1.9" transform="rotate(45 449.9 320.3)"/><ellipse cx="445.6" cy="322.1" rx="5.0" ry="1.9" transform="rotate(90 445.6 322.1)"/><ellipse cx="441.3" cy="320.3" rx="5.0" ry="1.9" transform="rotate(135 441.3 320.3)"/><ellipse cx="439.6" cy="316.0" rx="5.0" ry="1.9" transform="rotate(180 439.6 316.0)"/><ellipse cx="441.3" cy="311.7" rx="5.0" ry="1.9" transform="rotate(225 441.3 311.7)"/><ellipse cx="445.6" cy="309.9" rx="5.0" ry="1.9" transform="rotate(270 445.6 309.9)"/><ellipse cx="449.9" cy="311.7" rx="5.0" ry="1.9" transform="rotate(315 449.9 311.7)"/><circle cx="445.6" cy="316" r="1.6"/></g><g transform="rotate(70 472 324)"><ellipse cx="472" cy="324" rx="5" ry="8" fill="#eab08e"/><path d="M470 314.5L472 317L474 314.5" fill="none" stroke="#eab08e" stroke-width="0.9"/><g fill="#b57e66"><circle cx="473" cy="323" r="0.4"/><circle cx="473.8" cy="325" r="0.4"/><circle cx="472.6" cy="326.5" r="0.4"/></g></g><g transform="rotate(10 488 320)"><ellipse cx="488" cy="320" rx="5" ry="8" fill="#eab08e"/><path d="M486 310.5L488 313L490 310.5" fill="none" stroke="#eab08e" stroke-width="0.9"/><g fill="#b57e66"><circle cx="489" cy="319" r="0.4"/><circle cx="489.8" cy="321" r="0.4"/><circle cx="488.6" cy="322.5" r="0.4"/></g></g><path d="M426 329.0Q431 335 426 341.0Q421 335 426 329.0Z" fill="#7ec6cc" transform="rotate(-60 426 335)"/><path d="M389 338.0Q395 346 389 354.0Q383 346 389 338.0Z" fill="#e9c05a" transform="rotate(15 389 346)"/><path d="M451 337.5Q458 346 451 354.5Q444 346 451 337.5Z" fill="#e9c05a" transform="rotate(40 451 346)"/><path d="M463 333.5Q468 342 463 350.5Q458 342 463 333.5Z" fill="none" stroke="#7ec6cc" stroke-width="0.8" transform="rotate(15 463 342)"/><path d="M463 333.5V350.5" stroke="#7ec6cc" stroke-width="0.6" transform="rotate(15 463 342)"/><circle cx="357" cy="340" r="2.6" fill="#f1c3a4"/><circle cx="356.7" cy="339.7" r="0.7" fill="#6a4a4a"/><circle cx="364" cy="346" r="2.6" fill="#f1c3a4"/><circle cx="363.7" cy="345.7" r="0.7" fill="#6a4a4a"/><circle cx="373" cy="345" r="2.6" fill="#f1c3a4"/><circle cx="372.7" cy="344.7" r="0.7" fill="#6a4a4a"/><g transform="rotate(-10 410 347)"><ellipse cx="410" cy="347" rx="5" ry="8" fill="#eab08e"/><path d="M408 337.5L410 340L412 337.5" fill="none" stroke="#eab08e" stroke-width="0.9"/><g fill="#b57e66"><circle cx="411" cy="346" r="0.4"/><circle cx="411.8" cy="348" r="0.4"/><circle cx="410.6" cy="349.5" r="0.4"/></g></g><g transform="rotate(20 428 351)"><ellipse cx="428" cy="351" rx="4" ry="6" fill="#eab08e"/><path d="M426 343.5L428 346L430 343.5" fill="none" stroke="#eab08e" stroke-width="0.9"/><g fill="#b57e66"><circle cx="429" cy="350" r="0.4"/><circle cx="429.8" cy="352" r="0.4"/><circle cx="428.6" cy="353.5" r="0.4"/></g></g>
<rect x="300" y="110" width="240" height="250" fill="url(#cupg)"/>
<path d="M354 177H489L482 244H360Z" fill="url(#labg)"/>
</g>
<path d="M322 125.5H520" stroke="#0f1c30" stroke-width="0.9" opacity=".5"/>
</svg>
<svg style="left:385.5px;top:183.7px" width="70.6" height="57.1"><use href="#logo"/></svg>

<!-- playback controls -->
<svg style="left:530px;top:398px" width="95" height="13">
<g fill="#d6d6dc"><rect x="3" y="2.8" width="1.4" height="7.4"/><path d="M10.5 2.8V10.2L4.6 6.5Z"/>
<path d="M42.4 2L51 6.5L42.4 11Z" fill="#f0f0f4"/>
<rect x="87.6" y="2.8" width="1.4" height="7.4"/><path d="M81.5 2.8V10.2L87.4 6.5Z"/></g>
<g fill="none" stroke="#d6d6dc" stroke-width="1">
<path d="M25.8 2.6A4.1 4.1 0 1 1 21.7 6.7"/><path d="M27.3 1.1L25.6 2.6L27.3 4.1"/>
<path d="M65.4 2.6A4.1 4.1 0 1 0 69.5 6.7"/><path d="M63.9 1.1L65.6 2.6L63.9 4.1"/>
</g>
<g fill="#d6d6dc" font-family="Liberation Sans" font-size="4.5" font-weight="bold"><text x="24.6" y="8.6">1</text><text x="64.2" y="8.6">1</text></g>
</svg>
<svg style="left:851.5px;top:399.5px" width="9" height="9"><path d="M0.5 3V0.5H3M6 0.5H8.5V3M8.5 6V8.5H6M3 8.5H0.5V6" fill="none" stroke="#d6d6dc" stroke-width="0.9"/></svg>

<!-- timeline -->
<div class="a" style="left:189px;top:437px;width:737px;height:143px;background:#16161e"></div>
<div class="a" style="left:189px;top:463px;width:737px;height:0.8px;background:#202029"></div>
<div class="a" style="left:897px;top:430px;width:21px;height:7px;border-radius:3px 3px 0 0;background:#22222c"></div>
<svg style="left:904.5px;top:432px" width="6" height="4"><path d="M0.6 0.6L3 3L5.4 0.6" fill="none" stroke="#b0b0ba" stroke-width="0.8"/></svg>
<!-- toolbar buttons -->
<div class="a" style="left:199.5px;top:442px;width:16px;height:16px;border-radius:2px;background:#1a1a23"></div>
<div class="a" style="left:219px;top:442px;width:16px;height:16px;border-radius:2px;background:#1a1a23"></div>
<div class="a" style="left:239px;top:442px;width:16px;height:16px;border-radius:2px;background:#1a1a23"></div>
<div class="a" style="left:259px;top:442px;width:16px;height:16px;border-radius:2px;background:#1a1a23"></div>
<div class="a" style="left:279px;top:442px;width:16px;height:16px;border-radius:2px;background:#1a1a23"></div>
<svg style="left:199.5px;top:442px" width="100" height="16">
<g fill="none" stroke="#a0a0aa" stroke-width="0.9">
<path d="M5.2 5.6H8.6A2.6 2.6 0 0 1 8.6 10.8H5.6M6.9 4L5.2 5.6L6.9 7.2"/>
<path d="M30.8 5.6H27.4A2.6 2.6 0 0 0 27.4 10.8H30.4M29.1 4L30.8 5.6L29.1 7.2"/>
<circle cx="45.3" cy="10.4" r="1.3"/><circle cx="50.2" cy="10.4" r="1.3"/><path d="M46 9.3L49.6 4.3M49.5 9.3L45.9 4.3"/>
<path d="M63.6 5.6H71.4M64.6 5.6L65.2 11.6H69.8L70.4 5.6M66.3 5.6V4.4H68.7V5.6M66.8 7.2V10M68.2 7.2V10"/>
<path d="M84.2 4.6H88.2L89.8 6.2V8.6M89 11.5H84.2V4.6"/>
</g><circle cx="90" cy="10.6" r="2" fill="#a0a0aa"/><path d="M89.2 10.6L89.8 11.2L90.9 10" fill="none" stroke="#1a1a23" stroke-width="0.5"/>
</svg>
<div class="a" style="left:543px;top:445.5px;font-family:'Liberation Mono',monospace;font-size:7px;line-height:8px;color:#8e8e98;white-space:nowrap"><b style="color:#e6e6ec">0:04</b>.00 / <b style="color:#e6e6ec">1:25</b>.00</div>
<div class="a" style="left:860px;top:442px;width:16px;height:16px;border-radius:2px;background:#1a1a23"></div>
<div class="a" style="left:880px;top:442px;width:16px;height:16px;border-radius:2px;background:#1a1a23"></div>
<div class="a" style="left:900.5px;top:442px;width:16px;height:16px;border-radius:2px;background:#1a1a23"></div>
<svg style="left:860px;top:442px" width="60" height="16"><g fill="none" stroke="#a6a6b0" stroke-width="0.9"><path d="M8 4.5V11.5M4.5 8H11.5"/><path d="M24.5 8H31.5"/><path d="M45 11L48 8M45.3 8.2H48V10.9M52 5L49 8M49 5.3V8H51.7"/></g></svg>
<!-- ruler -->
<div class="a" style="left:197.5px;top:464.5px;font-family:'Liberation Mono',monospace;font-size:7px;line-height:8px;color:#85858f;white-space:nowrap;">0</div>
<div class="a" style="left:355px;top:464.5px;font-family:'Liberation Mono',monospace;font-size:7px;line-height:8px;color:#85858f;white-space:nowrap;">0:02</div>
<div class="a" style="left:495px;top:464.5px;font-family:'Liberation Mono',monospace;font-size:7px;line-height:8px;color:#85858f;white-space:nowrap;">0:04</div>
<div class="a" style="left:635px;top:464.5px;font-family:'Liberation Mono',monospace;font-size:7px;line-height:8px;color:#85858f;white-space:nowrap;">0:06</div>
<div class="a" style="left:775px;top:464.5px;font-family:'Liberation Mono',monospace;font-size:7px;line-height:8px;color:#85858f;white-space:nowrap;">0:08</div>
<div class="a" style="left:915px;top:464.5px;font-family:'Liberation Mono',monospace;font-size:7px;line-height:8px;color:#85858f;white-space:nowrap;width:11px;overflow:hidden;">0:10</div>
<svg style="left:0;top:463px" width="966" height="20"><g stroke="#2a2a34" stroke-width="0.8"><path d="M354 0V13M494 0V13M634 0V13M773.5 0V13M914 0V13"/><path d="M276.5 0V7M428 0V7M568.5 0V7M708.5 0V7M868 0V7"/></g></svg>
<!-- tracks -->
<div class="a" style="left:196px;top:483px;width:730px;height:15.5px;border-radius:2px 0 0 2px;background:#1c1c28"></div>
<div class="a" style="left:196.5px;top:500.1px;width:156.5px;height:14.7px;border-radius:2.5px;background:#5b4fd9"></div>
<div class="a" style="left:355px;top:500.1px;width:136px;height:14.7px;border-radius:2.5px;background:#5b4fd9"></div>
<div class="a" style="left:633.5px;top:500.1px;width:138px;height:14.7px;border-radius:2.5px;background:#5b4fd9"></div>
<svg style="left:0;top:500.5px" width="966" height="14"><g fill="none" stroke="#c9c5f0" stroke-width="0.6"><path d="M200.5 4.5V3.5H205.5V4.5M203 3.5V10.5M202 10.5H204"/><path d="M359 4.5V3.5H364V4.5M361.5 3.5V10.5M360.5 10.5H362.5"/><path d="M638 4.5V3.5H643V4.5M640.5 3.5V10.5M639.5 10.5H641.5"/></g></svg>
<div class="a" style="left:212.5px;top:504.5px;font-size:6.6px;line-height:7px;color:#f0f0fa;-webkit-text-stroke:0.2px #f0f0fa">FruiTea</div>
<div class="a" style="left:371px;top:504.5px;font-size:6.6px;line-height:7px;color:#f0f0fa;-webkit-text-stroke:0.2px #f0f0fa">Color Palette</div>
<div class="a" style="left:650px;top:504.5px;font-size:6.6px;line-height:7px;color:#f0f0fa;-webkit-text-stroke:0.2px #f0f0fa">Spicy Punch</div>
<div class="a" style="left:196.5px;top:518.5px;width:156.5px;height:32.5px;border-radius:2px;overflow:hidden;background:#f4f4f4"><svg style="left:12.65px;top:1.11px" width="37.50" height="30.36"><use href="#logo"/></svg><svg style="left:63.85px;top:1.11px" width="37.50" height="30.36"><use href="#logo"/></svg><svg style="left:108.55px;top:1.11px" width="37.50" height="30.36"><use href="#logo"/></svg></div>
<div class="a" style="left:355px;top:518.5px;width:136px;height:32.5px;border-radius:2px;overflow:hidden;background:#f4f4f4"><div class="a" style="left:0px;top:0;width:23px;height:32.5px;background:#fbfaf8"><div class="a" style="left:3px;top:10px;width:2px;height:2px;border-radius:1px;background:#1f3554"></div><div class="a" style="left:6px;top:10px;width:2px;height:2px;border-radius:1px;background:#e8b23a"></div><div class="a" style="left:9px;top:10px;width:2px;height:2px;border-radius:1px;background:#f2b48f"></div><div class="a" style="left:12px;top:10px;width:2px;height:2px;border-radius:1px;background:#d94f4a"></div><div class="a" style="left:3px;top:17px;width:2px;height:2px;border-radius:1px;background:#50719a"></div><div class="a" style="left:6px;top:17px;width:2px;height:2px;border-radius:1px;background:#f0c85a"></div><div class="a" style="left:9px;top:17px;width:2px;height:2px;border-radius:1px;background:#f6c7a8"></div><div class="a" style="left:12px;top:17px;width:2px;height:2px;border-radius:1px;background:#2f8f3f"></div><div class="a" style="left:2px;top:2px;width:12px;height:1.5px;background:#9aa6b8"></div><div class="a" style="left:2px;top:24px;width:8px;height:3px;background:#b9d3e0"></div></div><div class="a" style="left:23px;top:0;width:34.3px;height:32.5px;background:#f6c9b0"><div class="a" style="left:8.0px;top:25.5px;width:4.4px;height:4.4px;border-radius:50%;background:#233a5c"></div><div class="a" style="left:10.7px;top:17.4px;width:3.4px;height:3.4px;border-radius:50%;background:#233a5c"></div><div class="a" style="left:19.5px;top:24.1px;width:2.3px;height:2.3px;border-radius:50%;background:#233a5c"></div><div class="a" style="left:5.6px;top:25.2px;width:3.4px;height:3.4px;border-radius:50%;background:#233a5c"></div><div class="a" style="left:22.0px;top:6.0px;width:3.4px;height:3.4px;border-radius:50%;background:#233a5c"></div><div class="a" style="left:21.1px;top:11.3px;width:5.0px;height:5.0px;border-radius:50%;background:#233a5c"></div><div class="a" style="left:25.1px;top:6.7px;width:2.1px;height:2.1px;border-radius:50%;background:#233a5c"></div><div class="a" style="left:17.1px;top:27.6px;width:3.2px;height:3.2px;border-radius:50%;background:#233a5c"></div><div class="a" style="left:9.8px;top:15.7px;width:2.1px;height:2.1px;border-radius:50%;background:#233a5c"></div><div class="a" style="left:9.9px;top:16.1px;width:3.6px;height:3.6px;border-radius:50%;background:#233a5c"></div><div class="a" style="left:10.2px;top:11.3px;width:2.7px;height:2.7px;border-radius:50%;background:#233a5c"></div><div class="a" style="left:15.2px;top:12.7px;width:2.1px;height:2.1px;border-radius:50%;background:#233a5c"></div><div class="a" style="left:23.7px;top:18.8px;width:4.1px;height:4.1px;border-radius:50%;background:#233a5c"></div><div class="a" style="left:9.1px;top:28.8px;width:4.8px;height:4.8px;border-radius:50%;background:#233a5c"></div><div class="a" style="left:7.7px;top:13.7px;width:4.3px;height:4.3px;border-radius:50%;background:#233a5c"></div><div class="a" style="left:20.9px;top:27.5px;width:3.4px;height:3.4px;border-radius:50%;background:#233a5c"></div><div class="a" style="left:23.5px;top:21.4px;width:3.0px;height:3.0px;border-radius:50%;background:#233a5c"></div><div class="a" style="left:18.1px;top:26.3px;width:4.7px;height:4.7px;border-radius:50%;background:#233a5c"></div><div class="a" style="left:16.3px;top:19.5px;width:2.1px;height:2.1px;border-radius:50%;background:#233a5c"></div><div class="a" style="left:10.4px;top:24.3px;width:3.3px;height:3.3px;border-radius:50%;background:#233a5c"></div><div class="a" style="left:8.9px;top:18.6px;width:4.2px;height:4.2px;border-radius:50%;background:#233a5c"></div><div class="a" style="left:20.0px;top:14.6px;width:3.4px;height:3.4px;border-radius:50%;background:#233a5c"></div><div class="a" style="left:8px;top:2px;width:18px;height:1.5px;background:#b98e7a"></div></div><div class="a" style="left:57.3px;top:0;width:23.7px;height:32.5px;background:#fbfaf8"><div class="a" style="left:3px;top:10px;width:2px;height:2px;border-radius:1px;background:#1f3554"></div><div class="a" style="left:6px;top:10px;width:2px;height:2px;border-radius:1px;background:#e8b23a"></div><div class="a" style="left:9px;top:10px;width:2px;height:2px;border-radius:1px;background:#f2b48f"></div><div class="a" style="left:12px;top:10px;width:2px;height:2px;border-radius:1px;background:#d94f4a"></div><div class="a" style="left:3px;top:17px;width:2px;height:2px;border-radius:1px;background:#50719a"></div><div class="a" style="left:6px;top:17px;width:2px;height:2px;border-radius:1px;background:#f0c85a"></div><div class="a" style="left:9px;top:17px;width:2px;height:2px;border-radius:1px;background:#f6c7a8"></div><div class="a" style="left:12px;top:17px;width:2px;height:2px;border-radius:1px;background:#2f8f3f"></div><div class="a" style="left:2px;top:2px;width:12px;height:1.5px;background:#9aa6b8"></div><div class="a" style="left:2px;top:24px;width:8px;height:3px;background:#b9d3e0"></div></div><div class="a" style="left:81.0px;top:0;width:34.3px;height:32.5px;background:#f6c9b0"><div class="a" style="left:10.3px;top:18.5px;width:3.2px;height:3.2px;border-radius:50%;background:#233a5c"></div><div class="a" style="left:18.5px;top:20.4px;width:2.2px;height:2.2px;border-radius:50%;background:#233a5c"></div><div class="a" style="left:5.3px;top:25.3px;width:2.8px;height:2.8px;border-radius:50%;background:#233a5c"></div><div class="a" style="left:10.2px;top:28.9px;width:3.5px;height:3.5px;border-radius:50%;background:#233a5c"></div><div class="a" style="left:23.7px;top:17.0px;width:4.0px;height:4.0px;border-radius:50%;background:#233a5c"></div><div class="a" style="left:8.4px;top:20.6px;width:4.8px;height:4.8px;border-radius:50%;background:#233a5c"></div><div class="a" style="left:16.7px;top:23.0px;width:4.1px;height:4.1px;border-radius:50%;background:#233a5c"></div><div class="a" style="left:6.4px;top:23.4px;width:3.9px;height:3.9px;border-radius:50%;background:#233a5c"></div><div class="a" style="left:11.7px;top:6.7px;width:4.8px;height:4.8px;border-radius:50%;background:#233a5c"></div><div class="a" style="left:15.5px;top:22.5px;width:4.8px;height:4.8px;border-radius:50%;background:#233a5c"></div><div class="a" style="left:20.9px;top:27.2px;width:3.3px;height:3.3px;border-radius:50%;background:#233a5c"></div><div class="a" style="left:22.9px;top:16.2px;width:5.0px;height:5.0px;border-radius:50%;background:#233a5c"></div><div class="a" style="left:24.6px;top:8.2px;width:2.4px;height:2.4px;border-radius:50%;background:#233a5c"></div><div class="a" style="left:9.8px;top:28.2px;width:3.4px;height:3.4px;border-radius:50%;background:#233a5c"></div><div class="a" style="left:19.0px;top:12.9px;width:3.6px;height:3.6px;border-radius:50%;background:#233a5c"></div><div class="a" style="left:13.6px;top:14.1px;width:3.9px;height:3.9px;border-radius:50%;background:#233a5c"></div><div class="a" style="left:18.0px;top:26.8px;width:4.2px;height:4.2px;border-radius:50%;background:#233a5c"></div><div class="a" style="left:25.7px;top:25.7px;width:5.2px;height:5.2px;border-radius:50%;background:#233a5c"></div><div class="a" style="left:20.0px;top:9.8px;width:4.8px;height:4.8px;border-radius:50%;background:#233a5c"></div><div class="a" style="left:26.5px;top:26.8px;width:3.8px;height:3.8px;border-radius:50%;background:#233a5c"></div><div class="a" style="left:20.9px;top:10.9px;width:4.7px;height:4.7px;border-radius:50%;background:#233a5c"></div><div class="a" style="left:17.8px;top:12.6px;width:2.2px;height:2.2px;border-radius:50%;background:#233a5c"></div><div class="a" style="left:8px;top:2px;width:18px;height:1.5px;background:#b98e7a"></div></div><div class="a" style="left:115.3px;top:0;width:20.5px;height:32.5px;background:#fbfaf8"><div class="a" style="left:3px;top:10px;width:2px;height:2px;border-radius:1px;background:#1f3554"></div><div class="a" style="left:6px;top:10px;width:2px;height:2px;border-radius:1px;background:#e8b23a"></div><div class="a" style="left:9px;top:10px;width:2px;height:2px;border-radius:1px;background:#f2b48f"></div><div class="a" style="left:12px;top:10px;width:2px;height:2px;border-radius:1px;background:#d94f4a"></div><div class="a" style="left:3px;top:17px;width:2px;height:2px;border-radius:1px;background:#50719a"></div><div class="a" style="left:6px;top:17px;width:2px;height:2px;border-radius:1px;background:#f0c85a"></div><div class="a" style="left:9px;top:17px;width:2px;height:2px;border-radius:1px;background:#f6c7a8"></div><div class="a" style="left:12px;top:17px;width:2px;height:2px;border-radius:1px;background:#2f8f3f"></div><div class="a" style="left:2px;top:2px;width:12px;height:1.5px;background:#9aa6b8"></div><div class="a" style="left:2px;top:24px;width:8px;height:3px;background:#b9d3e0"></div></div></div>
<div class="a" style="left:491.5px;top:518.5px;width:141.5px;height:32.5px;border-radius:2px;overflow:hidden;background:#f4f4f4"><div class="a" style="left:0px;top:0;width:28.3px;height:32.5px;background:#f2c765"><svg style="left:3.5px;top:5px" width="20" height="24"><path d="M0.5 0.5H19.5L16.5 23H3.5Z" fill="#1f3554"/><path d="M0.5 0.5H4V3H0.8Z" fill="#cf4c45"/><path d="M16 0.5H19.5L19.2 3H16Z" fill="#cf4c45"/><path d="M4.5 6.5H15.5L15 12.5H5Z" fill="#e6e6e6"/><circle cx="10" cy="9.5" r="2" fill="#f2b48f"/><g fill="#e8b23a"><circle cx="6" cy="16" r="1.2"/><circle cx="12" cy="19" r="1.2"/><circle cx="14" cy="15" r="1"/></g><g fill="#f2c2a2"><circle cx="8" cy="3" r="0.8"/><circle cx="13" cy="4" r="0.8"/><circle cx="9" cy="17" r="0.8"/></g></svg></div><div class="a" style="left:28.3px;top:0;width:28.3px;height:32.5px;background:#ffffff"><svg style="left:3.80px;top:7.64px" width="21.00" height="17.00"><use href="#logo"/></svg></div><div class="a" style="left:56.6px;top:0;width:28.3px;height:32.5px;background:#f2c765"><svg style="left:3.5px;top:5px" width="20" height="24"><path d="M0.5 0.5H19.5L16.5 23H3.5Z" fill="#1f3554"/><path d="M0.5 0.5H4V3H0.8Z" fill="#cf4c45"/><path d="M16 0.5H19.5L19.2 3H16Z" fill="#cf4c45"/><path d="M4.5 6.5H15.5L15 12.5H5Z" fill="#e6e6e6"/><circle cx="10" cy="9.5" r="2" fill="#f2b48f"/><g fill="#e8b23a"><circle cx="6" cy="16" r="1.2"/><circle cx="12" cy="19" r="1.2"/><circle cx="14" cy="15" r="1"/></g><g fill="#f2c2a2"><circle cx="8" cy="3" r="0.8"/><circle cx="13" cy="4" r="0.8"/><circle cx="9" cy="17" r="0.8"/></g></svg></div><div class="a" style="left:84.9px;top:0;width:28.3px;height:32.5px;background:#ffffff"><svg style="left:3.80px;top:7.64px" width="21.00" height="17.00"><use href="#logo"/></svg></div><div class="a" style="left:113.2px;top:0;width:28.3px;height:32.5px;background:#f2c765"><svg style="left:3.5px;top:5px" width="20" height="24"><path d="M0.5 0.5H19.5L16.5 23H3.5Z" fill="#1f3554"/><path d="M0.5 0.5H4V3H0.8Z" fill="#cf4c45"/><path d="M16 0.5H19.5L19.2 3H16Z" fill="#cf4c45"/><path d="M4.5 6.5H15.5L15 12.5H5Z" fill="#e6e6e6"/><circle cx="10" cy="9.5" r="2" fill="#f2b48f"/><g fill="#e8b23a"><circle cx="6" cy="16" r="1.2"/><circle cx="12" cy="19" r="1.2"/><circle cx="14" cy="15" r="1"/></g><g fill="#f2c2a2"><circle cx="8" cy="3" r="0.8"/><circle cx="13" cy="4" r="0.8"/><circle cx="9" cy="17" r="0.8"/></g></svg></div></div>
<div class="a" style="left:634px;top:518.5px;width:137px;height:32.5px;border-radius:2px;overflow:hidden;background:#f4f4f4"><div class="a" style="left:0px;top:0;width:24.8px;height:32.5px;background:#fbfbfb"><div class="a" style="left:6px;top:2.5px;width:12px;height:1.2px;background:#9aa0b0"></div><div class="a" style="left:4.3px;top:7.5px;width:15.5px;height:22.5px;background:#1f3554"></div><div class="a" style="left:7.5px;top:12px;width:9px;height:10px;background:#eeeeee"></div><div class="a" style="left:10px;top:13px;width:4px;height:4px;border-radius:50%;background:#e8b23a"></div><div class="a" style="left:5px;top:9px;width:2px;height:2px;background:#e8b23a"></div><div class="a" style="left:17px;top:25px;width:2px;height:2px;background:#cf4c45"></div></div><div class="a" style="left:24.8px;top:0;width:31.5px;height:32.5px;background:#1f3554"><div class="a" style="left:12.9px;top:16.5px;width:4.2px;height:3.4px;border-radius:50%;background:#e8b23a"></div><div class="a" style="left:13.3px;top:15.0px;width:3.2px;height:2.6px;border-radius:50%;background:#f2b48f"></div><div class="a" style="left:5.3px;top:15.1px;width:3.4px;height:2.7px;border-radius:50%;background:#5fa7bd"></div><div class="a" style="left:22.6px;top:2.8px;width:2.4px;height:2.0px;border-radius:50%;background:#e8b23a"></div><div class="a" style="left:2.6px;top:23.9px;width:3.5px;height:2.8px;border-radius:50%;background:#cf4c45"></div><div class="a" style="left:1.2px;top:29.0px;width:4.3px;height:3.4px;border-radius:50%;background:#f2b48f"></div><div class="a" style="left:18.6px;top:18.2px;width:2.0px;height:1.6px;border-radius:50%;background:#e8b23a"></div><div class="a" style="left:0.4px;top:15.6px;width:1.8px;height:1.4px;border-radius:50%;background:#e8b23a"></div><div class="a" style="left:5.4px;top:7.1px;width:1.7px;height:1.3px;border-radius:50%;background:#f2b48f"></div><div class="a" style="left:13.2px;top:13.0px;width:4.0px;height:3.2px;border-radius:50%;background:#5fa7bd"></div><div class="a" style="left:14.8px;top:18.9px;width:3.0px;height:2.4px;border-radius:50%;background:#e8b23a"></div><div class="a" style="left:18.9px;top:13.5px;width:2.4px;height:1.9px;border-radius:50%;background:#cf4c45"></div><div class="a" style="left:28.4px;top:29.4px;width:4.0px;height:3.2px;border-radius:50%;background:#f2b48f"></div><div class="a" style="left:20.2px;top:9.3px;width:2.2px;height:1.8px;border-radius:50%;background:#e8b23a"></div><div class="a" style="left:8.2px;top:2.1px;width:3.7px;height:3.0px;border-radius:50%;background:#e8b23a"></div><div class="a" style="left:11.4px;top:25.0px;width:2.7px;height:2.1px;border-radius:50%;background:#f2b48f"></div><div class="a" style="left:27.3px;top:25.0px;width:1.6px;height:1.3px;border-radius:50%;background:#5fa7bd"></div><div class="a" style="left:6.0px;top:26.9px;width:2.9px;height:2.3px;border-radius:50%;background:#e8b23a"></div><div class="a" style="left:27.9px;top:11.7px;width:1.8px;height:1.4px;border-radius:50%;background:#cf4c45"></div><div class="a" style="left:17.9px;top:23.0px;width:2.4px;height:1.9px;border-radius:50%;background:#f2b48f"></div><div class="a" style="left:2.5px;top:9.8px;width:4.3px;height:3.4px;border-radius:50%;background:#e8b23a"></div><div class="a" style="left:21.6px;top:3.5px;width:2.3px;height:1.8px;border-radius:50%;background:#e8b23a"></div><div class="a" style="left:2.9px;top:1.8px;width:3.8px;height:3.1px;border-radius:50%;background:#f2b48f"></div><div class="a" style="left:5.1px;top:16.5px;width:2.9px;height:2.3px;border-radius:50%;background:#5fa7bd"></div><div class="a" style="left:5.4px;top:21.6px;width:2.0px;height:1.6px;border-radius:50%;background:#e8b23a"></div><div class="a" style="left:18.3px;top:3.4px;width:2.8px;height:2.2px;border-radius:50%;background:#cf4c45"></div><div class="a" style="left:6.1px;top:8.0px;width:4.3px;height:3.5px;border-radius:50%;background:#f2b48f"></div><div class="a" style="left:22.9px;top:9.0px;width:4.1px;height:3.3px;border-radius:50%;background:#e8b23a"></div><div class="a" style="left:6.0px;top:11.6px;width:4.0px;height:3.2px;border-radius:50%;background:#e8b23a"></div><div class="a" style="left:18.3px;top:3.0px;width:4.4px;height:3.5px;border-radius:50%;background:#f2b48f"></div><div class="a" style="left:6.1px;top:7.6px;width:3.8px;height:3.0px;border-radius:50%;background:#5fa7bd"></div><div class="a" style="left:9.4px;top:8.7px;width:1.8px;height:1.4px;border-radius:50%;background:#e8b23a"></div><div class="a" style="left:2.6px;top:17.2px;width:2.3px;height:1.8px;border-radius:50%;background:#cf4c45"></div><div class="a" style="left:17.1px;top:11.0px;width:2.9px;height:2.3px;border-radius:50%;background:#f2b48f"></div><div class="a" style="left:14px;top:10px;width:6px;height:6px;border-radius:50%;background:#d9534a"></div><div class="a" style="left:0;top:0;width:3px;height:5px;background:#d9534a"></div></div><div class="a" style="left:56.3px;top:0;width:24.4px;height:32.5px;background:#fbfbfb"><div class="a" style="left:6px;top:2.5px;width:12px;height:1.2px;background:#9aa0b0"></div><div class="a" style="left:4.3px;top:7.5px;width:15.5px;height:22.5px;background:#1f3554"></div><div class="a" style="left:7.5px;top:12px;width:9px;height:10px;background:#eeeeee"></div><div class="a" style="left:10px;top:13px;width:4px;height:4px;border-radius:50%;background:#e8b23a"></div><div class="a" style="left:5px;top:9px;width:2px;height:2px;background:#e8b23a"></div><div class="a" style="left:17px;top:25px;width:2px;height:2px;background:#cf4c45"></div></div><div class="a" style="left:80.69999999999999px;top:0;width:32.2px;height:32.5px;background:#1f3554"><div class="a" style="left:7.6px;top:20.2px;width:3.5px;height:2.8px;border-radius:50%;background:#e8b23a"></div><div class="a" style="left:24.8px;top:5.5px;width:2.2px;height:1.8px;border-radius:50%;background:#f2b48f"></div><div class="a" style="left:4.3px;top:6.6px;width:3.7px;height:2.9px;border-radius:50%;background:#5fa7bd"></div><div class="a" style="left:3.8px;top:15.7px;width:2.2px;height:1.8px;border-radius:50%;background:#e8b23a"></div><div class="a" style="left:8.6px;top:12.7px;width:3.9px;height:3.2px;border-radius:50%;background:#cf4c45"></div><div class="a" style="left:17.8px;top:0.4px;width:2.4px;height:1.9px;border-radius:50%;background:#f2b48f"></div><div class="a" style="left:4.3px;top:25.7px;width:3.9px;height:3.1px;border-radius:50%;background:#e8b23a"></div><div class="a" style="left:23.5px;top:24.4px;width:3.7px;height:2.9px;border-radius:50%;background:#e8b23a"></div><div class="a" style="left:27.7px;top:23.4px;width:2.3px;height:1.9px;border-radius:50%;background:#f2b48f"></div><div class="a" style="left:24.8px;top:14.4px;width:3.7px;height:3.0px;border-radius:50%;background:#5fa7bd"></div><div class="a" style="left:16.5px;top:12.7px;width:2.6px;height:2.1px;border-radius:50%;background:#e8b23a"></div><div class="a" style="left:12.6px;top:9.3px;width:1.9px;height:1.5px;border-radius:50%;background:#cf4c45"></div><div class="a" style="left:23.9px;top:23.5px;width:4.4px;height:3.5px;border-radius:50%;background:#f2b48f"></div><div class="a" style="left:20.2px;top:16.3px;width:3.7px;height:3.0px;border-radius:50%;background:#e8b23a"></div><div class="a" style="left:3.9px;top:20.0px;width:2.8px;height:2.3px;border-radius:50%;background:#e8b23a"></div><div class="a" style="left:5.2px;top:6.0px;width:3.1px;height:2.5px;border-radius:50%;background:#f2b48f"></div><div class="a" style="left:7.4px;top:13.6px;width:3.3px;height:2.6px;border-radius:50%;background:#5fa7bd"></div><div class="a" style="left:11.6px;top:3.9px;width:3.0px;height:2.4px;border-radius:50%;background:#e8b23a"></div><div class="a" style="left:6.9px;top:7.0px;width:2.1px;height:1.7px;border-radius:50%;background:#cf4c45"></div><div class="a" style="left:10.7px;top:2.2px;width:3.4px;height:2.7px;border-radius:50%;background:#f2b48f"></div><div class="a" style="left:27.8px;top:11.5px;width:3.6px;height:2.9px;border-radius:50%;background:#e8b23a"></div><div class="a" style="left:27.2px;top:1.3px;width:2.0px;height:1.6px;border-radius:50%;background:#e8b23a"></div><div class="a" style="left:23.5px;top:24.7px;width:3.4px;height:2.7px;border-radius:50%;background:#f2b48f"></div><div class="a" style="left:4.7px;top:12.2px;width:4.0px;height:3.2px;border-radius:50%;background:#5fa7bd"></div><div class="a" style="left:25.9px;top:23.7px;width:2.2px;height:1.7px;border-radius:50%;background:#e8b23a"></div><div class="a" style="left:24.9px;top:11.1px;width:3.6px;height:2.9px;border-radius:50%;background:#cf4c45"></div><div class="a" style="left:4.0px;top:28.7px;width:3.3px;height:2.6px;border-radius:50%;background:#f2b48f"></div><div class="a" style="left:21.1px;top:6.2px;width:3.3px;height:2.7px;border-radius:50%;background:#e8b23a"></div><div class="a" style="left:17.0px;top:17.4px;width:2.6px;height:2.1px;border-radius:50%;background:#e8b23a"></div><div class="a" style="left:21.2px;top:10.1px;width:2.4px;height:1.9px;border-radius:50%;background:#f2b48f"></div><div class="a" style="left:4.8px;top:20.2px;width:1.9px;height:1.5px;border-radius:50%;background:#5fa7bd"></div><div class="a" style="left:6.6px;top:2.0px;width:3.4px;height:2.7px;border-radius:50%;background:#e8b23a"></div><div class="a" style="left:16.2px;top:16.0px;width:1.7px;height:1.4px;border-radius:50%;background:#cf4c45"></div><div class="a" style="left:12.8px;top:10.1px;width:1.9px;height:1.5px;border-radius:50%;background:#f2b48f"></div><div class="a" style="left:14px;top:10px;width:6px;height:6px;border-radius:50%;background:#d9534a"></div><div class="a" style="left:0;top:0;width:3px;height:5px;background:#d9534a"></div></div><div class="a" style="left:112.89999999999999px;top:0;width:24.1px;height:32.5px;background:#fbfbfb"><div class="a" style="left:6px;top:2.5px;width:12px;height:1.2px;background:#9aa0b0"></div><div class="a" style="left:4.3px;top:7.5px;width:15.5px;height:22.5px;background:#1f3554"></div><div class="a" style="left:7.5px;top:12px;width:9px;height:10px;background:#eeeeee"></div><div class="a" style="left:10px;top:13px;width:4px;height:4px;border-radius:50%;background:#e8b23a"></div><div class="a" style="left:5px;top:9px;width:2px;height:2px;background:#e8b23a"></div><div class="a" style="left:17px;top:25px;width:2px;height:2px;background:#cf4c45"></div></div></div>
<div class="a" style="left:773px;top:518.5px;width:140px;height:32.5px;border-radius:2px;overflow:hidden;background:#f4f4f4"><div class="a" style="left:0px;top:0;width:24px;height:32.5px;background:#f7f5f2"><svg style="left:2px;top:0" width="22" height="33"><path d="M3 0L10 14M18 0L12 14" stroke="#c9b98a" stroke-width="0.6"/><path d="M6.5 14H15.5L14.5 31H7.5Z" fill="#d39a2c"/><path d="M6.5 14H15.5L15.2 19H6.8Z" fill="#f1d9a0"/><circle cx="15.5" cy="14" r="2.6" fill="#f0c95a"/></svg></div><div class="a" style="left:24px;top:0;width:32px;height:32.5px;overflow:hidden"><div class="a" style="left:0px;top:0px;width:32px;height:32.5px;background:#5a9ee0;"></div><div class="a" style="left:0px;top:14px;width:32px;height:19px;background:#3a2c2a;"></div><div class="a" style="left:0px;top:10px;width:11px;height:23px;background:#2a1e1a;border-radius:40% 40% 0 0"></div><div class="a" style="left:3px;top:13px;width:7px;height:10px;background:#8a5a40;border-radius:50%"></div><div class="a" style="left:6px;top:2px;width:10px;height:9px;background:#4a3428;border-radius:50% 50% 20% 20%"></div><div class="a" style="left:8px;top:5px;width:7px;height:7px;background:#a87050;border-radius:50%"></div><div class="a" style="left:17px;top:0px;width:10px;height:14px;background:#4a3a30;border-radius:50%"></div><div class="a" style="left:18px;top:2px;width:8px;height:11px;background:#d8a890;border-radius:50%"></div><div class="a" style="left:11px;top:13px;width:13px;height:20px;background:#c0541e;border-radius:50%"></div><div class="a" style="left:13px;top:16px;width:8px;height:11px;background:#e2a07a;border-radius:50%"></div><div class="a" style="left:22px;top:12px;width:10px;height:21px;background:#2a1a14;border-radius:50%"></div><div class="a" style="left:24px;top:16px;width:7px;height:11px;background:#c08868;border-radius:50%"></div><div class="a" style="left:0px;top:28px;width:32px;height:5px;background:#c8902a;"></div><div class="a" style="left:14px;top:27px;width:8px;height:6px;background:#5a8a9a;"></div></div><div class="a" style="left:56px;top:0;width:24px;height:32.5px;background:#f7f5f2"><svg style="left:2px;top:0" width="22" height="33"><path d="M3 0L10 14M18 0L12 14" stroke="#c9b98a" stroke-width="0.6"/><path d="M6.5 14H15.5L14.5 31H7.5Z" fill="#d39a2c"/><path d="M6.5 14H15.5L15.2 19H6.8Z" fill="#f1d9a0"/><circle cx="15.5" cy="14" r="2.6" fill="#f0c95a"/></svg></div><div class="a" style="left:80px;top:0;width:32px;height:32.5px;overflow:hidden"><div class="a" style="left:0px;top:0px;width:32px;height:32.5px;background:#5a9ee0;"></div><div class="a" style="left:0px;top:14px;width:32px;height:19px;background:#3a2c2a;"></div><div class="a" style="left:0px;top:10px;width:11px;height:23px;background:#2a1e1a;border-radius:40% 40% 0 0"></div><div class="a" style="left:3px;top:13px;width:7px;height:10px;background:#8a5a40;border-radius:50%"></div><div class="a" style="left:6px;top:2px;width:10px;height:9px;background:#4a3428;border-radius:50% 50% 20% 20%"></div><div class="a" style="left:8px;top:5px;width:7px;height:7px;background:#a87050;border-radius:50%"></div><div class="a" style="left:17px;top:0px;width:10px;height:14px;background:#4a3a30;border-radius:50%"></div><div class="a" style="left:18px;top:2px;width:8px;height:11px;background:#d8a890;border-radius:50%"></div><div class="a" style="left:11px;top:13px;width:13px;height:20px;background:#c0541e;border-radius:50%"></div><div class="a" style="left:13px;top:16px;width:8px;height:11px;background:#e2a07a;border-radius:50%"></div><div class="a" style="left:22px;top:12px;width:10px;height:21px;background:#2a1a14;border-radius:50%"></div><div class="a" style="left:24px;top:16px;width:7px;height:11px;background:#c08868;border-radius:50%"></div><div class="a" style="left:0px;top:28px;width:32px;height:5px;background:#c8902a;"></div><div class="a" style="left:14px;top:27px;width:8px;height:6px;background:#5a8a9a;"></div></div><div class="a" style="left:112px;top:0;width:25.5px;height:32.5px;background:#f7f5f2"><svg style="left:2px;top:0" width="22" height="33"><path d="M3 0L10 14M18 0L12 14" stroke="#c9b98a" stroke-width="0.6"/><path d="M6.5 14H15.5L14.5 31H7.5Z" fill="#d39a2c"/><path d="M6.5 14H15.5L15.2 19H6.8Z" fill="#f1d9a0"/><circle cx="15.5" cy="14" r="2.6" fill="#f0c95a"/></svg></div><div class="a" style="left:137.5px;top:0;width:2.5px;height:32.5px;overflow:hidden"><div class="a" style="left:0px;top:0px;width:2.5px;height:32.5px;background:#5a9ee0;"></div><div class="a" style="left:0px;top:14px;width:2.5px;height:19px;background:#3a2c2a;"></div><div class="a" style="left:0px;top:10px;width:11px;height:23px;background:#2a1e1a;border-radius:40% 40% 0 0"></div><div class="a" style="left:3px;top:13px;width:7px;height:10px;background:#8a5a40;border-radius:50%"></div><div class="a" style="left:6px;top:2px;width:10px;height:9px;background:#4a3428;border-radius:50% 50% 20% 20%"></div><div class="a" style="left:8px;top:5px;width:7px;height:7px;background:#a87050;border-radius:50%"></div><div class="a" style="left:17px;top:0px;width:10px;height:14px;background:#4a3a30;border-radius:50%"></div><div class="a" style="left:18px;top:2px;width:8px;height:11px;background:#d8a890;border-radius:50%"></div><div class="a" style="left:11px;top:13px;width:13px;height:20px;background:#c0541e;border-radius:50%"></div><div class="a" style="left:13px;top:16px;width:8px;height:11px;background:#e2a07a;border-radius:50%"></div><div class="a" style="left:22px;top:12px;width:10px;height:21px;background:#2a1a14;border-radius:50%"></div><div class="a" style="left:24px;top:16px;width:7px;height:11px;background:#c08868;border-radius:50%"></div><div class="a" style="left:0px;top:28px;width:2.5px;height:5px;background:#c8902a;"></div><div class="a" style="left:14px;top:27px;width:8px;height:6px;background:#5a8a9a;"></div></div></div>
<div class="a" style="left:914.5px;top:518.5px;width:11.5px;height:32.5px;border-radius:2px;overflow:hidden;background:#f4f4f4"><div class="a" style="left:0;top:0;width:12px;height:33px;background:#ece8e6"></div><div class="a" style="left:5px;top:2px;width:7px;height:6px;background:#d84a4a;opacity:.6"></div><div class="a" style="left:0;top:8px;width:14px;height:25px;border-radius:50%;background:#3a2420"></div><div class="a" style="left:1px;top:11px;width:11px;height:18px;border-radius:50%;background:#d8a488"></div><div class="a" style="left:1px;top:16px;width:10px;height:2px;background:#222"></div></div>
<div class="a" style="left:196px;top:554px;width:730px;height:15.3px;border-radius:2px 0 0 2px;background:#3b6edb"></div>
<svg style="left:196px;top:555px" width="730" height="15"><path id="wave" d="M0 7.25" fill="none"/></svg>
<svg style="left:196px;top:554px" width="730" height="15.5"><g fill="#6d93e6" opacity=".65"><rect x="101.0" y="6.55" width="1" height="2.40"/><rect x="102.0" y="5.35" width="1" height="4.80"/><rect x="103.0" y="4.15" width="1" height="7.20"/><rect x="104.0" y="3.55" width="1" height="8.40"/><rect x="105.0" y="4.15" width="1" height="7.20"/><rect x="106.0" y="5.35" width="1" height="4.80"/><rect x="107.0" y="6.55" width="1" height="2.40"/><rect x="107.5" y="7.35" width="4.2" height="0.8"/><rect x="111.0" y="6.55" width="1" height="2.40"/><rect x="112.0" y="5.35" width="1" height="4.80"/><rect x="113.0" y="4.15" width="1" height="7.20"/><rect x="114.0" y="3.55" width="1" height="8.40"/><rect x="115.0" y="4.15" width="1" height="7.20"/><rect x="116.0" y="5.35" width="1" height="4.80"/><rect x="117.0" y="6.55" width="1" height="2.40"/><rect x="117.5" y="7.35" width="4.2" height="0.8"/><rect x="121.0" y="6.55" width="1" height="2.40"/><rect x="122.0" y="5.35" width="1" height="4.80"/><rect x="123.0" y="4.15" width="1" height="7.20"/><rect x="124.0" y="3.55" width="1" height="8.40"/><rect x="125.0" y="4.15" width="1" height="7.20"/><rect x="126.0" y="5.35" width="1" height="4.80"/><rect x="127.0" y="6.55" width="1" height="2.40"/><rect x="127.5" y="7.35" width="4.2" height="0.8"/><rect x="131.0" y="6.55" width="1" height="2.40"/><rect x="132.0" y="5.35" width="1" height="4.80"/><rect x="133.0" y="4.15" width="1" height="7.20"/><rect x="134.0" y="3.55" width="1" height="8.40"/><rect x="135.0" y="4.15" width="1" height="7.20"/><rect x="136.0" y="5.35" width="1" height="4.80"/><rect x="137.0" y="6.55" width="1" height="2.40"/><rect x="137.5" y="7.35" width="4.2" height="0.8"/><rect x="141.0" y="6.55" width="1" height="2.40"/><rect x="142.0" y="5.35" width="1" height="4.80"/><rect x="143.0" y="4.15" width="1" height="7.20"/><rect x="144.0" y="3.55" width="1" height="8.40"/><rect x="145.0" y="4.15" width="1" height="7.20"/><rect x="146.0" y="5.35" width="1" height="4.80"/><rect x="147.0" y="6.55" width="1" height="2.40"/><rect x="147.5" y="7.35" width="4.2" height="0.8"/><rect x="151.0" y="6.55" width="1" height="2.40"/><rect x="152.0" y="5.35" width="1" height="4.80"/><rect x="153.0" y="4.15" width="1" height="7.20"/><rect x="154.0" y="3.55" width="1" height="8.40"/><rect x="155.0" y="4.15" width="1" height="7.20"/><rect x="156.0" y="5.35" width="1" height="4.80"/><rect x="157.0" y="6.55" width="1" height="2.40"/><rect x="157.5" y="7.35" width="4.2" height="0.8"/><rect x="161.0" y="6.55" width="1" height="2.40"/><rect x="162.0" y="5.35" width="1" height="4.80"/><rect x="163.0" y="4.15" width="1" height="7.20"/><rect x="164.0" y="3.55" width="1" height="8.40"/><rect x="165.0" y="4.15" width="1" height="7.20"/><rect x="166.0" y="5.35" width="1" height="4.80"/><rect x="167.0" y="6.55" width="1" height="2.40"/><rect x="167.5" y="7.35" width="4.2" height="0.8"/><rect x="171.0" y="6.55" width="1" height="2.40"/><rect x="172.0" y="5.35" width="1" height="4.80"/><rect x="173.0" y="4.15" width="1" height="7.20"/><rect x="174.0" y="3.55" width="1" height="8.40"/><rect x="175.0" y="4.15" width="1" height="7.20"/><rect x="176.0" y="5.35" width="1" height="4.80"/><rect x="177.0" y="6.55" width="1" height="2.40"/><rect x="177.5" y="7.35" width="4.2" height="0.8"/><rect x="181.0" y="6.55" width="1" height="2.40"/><rect x="182.0" y="5.35" width="1" height="4.80"/><rect x="183.0" y="4.15" width="1" height="7.20"/><rect x="184.0" y="3.55" width="1" height="8.40"/><rect x="185.0" y="4.15" width="1" height="7.20"/><rect x="186.0" y="5.35" width="1" height="4.80"/><rect x="187.0" y="6.55" width="1" height="2.40"/><rect x="187.5" y="7.35" width="4.2" height="0.8"/><rect x="191.0" y="6.55" width="1" height="2.40"/><rect x="192.0" y="5.35" width="1" height="4.80"/><rect x="193.0" y="4.15" width="1" height="7.20"/><rect x="194.0" y="3.55" width="1" height="8.40"/><rect x="195.0" y="4.15" width="1" height="7.20"/><rect x="196.0" y="5.35" width="1" height="4.80"/><rect x="197.0" y="6.55" width="1" height="2.40"/><rect x="197.5" y="7.35" width="4.2" height="0.8"/><rect x="201.0" y="6.55" width="1" height="2.40"/><rect x="202.0" y="5.35" width="1" height="4.80"/><rect x="203.0" y="4.15" width="1" height="7.20"/><rect x="204.0" y="3.55" width="1" height="8.40"/><rect x="205.0" y="4.15" width="1" height="7.20"/><rect x="206.0" y="5.35" width="1" height="4.80"/><rect x="207.0" y="6.55" width="1" height="2.40"/><rect x="207.5" y="7.35" width="4.2" height="0.8"/><rect x="211.0" y="6.55" width="1" height="2.40"/><rect x="212.0" y="5.35" width="1" height="4.80"/><rect x="213.0" y="4.15" width="1" height="7.20"/><rect x="214.0" y="3.55" width="1" height="8.40"/><rect x="215.0" y="4.15" width="1" height="7.20"/><rect x="216.0" y="5.35" width="1" height="4.80"/><rect x="217.0" y="6.55" width="1" height="2.40"/><rect x="217.5" y="7.35" width="4.2" height="0.8"/><rect x="221.0" y="6.55" width="1" height="2.40"/><rect x="222.0" y="5.35" width="1" height="4.80"/><rect x="223.0" y="4.15" width="1" height="7.20"/><rect x="224.0" y="3.55" width="1" height="8.40"/><rect x="225.0" y="4.15" width="1" height="7.20"/><rect x="226.0" y="5.35" width="1" height="4.80"/><rect x="227.0" y="6.55" width="1" height="2.40"/><rect x="227.5" y="7.35" width="4.2" height="0.8"/><rect x="231.0" y="6.55" width="1" height="2.40"/><rect x="232.0" y="5.35" width="1" height="4.80"/><rect x="233.0" y="4.15" width="1" height="7.20"/><rect x="234.0" y="3.55" width="1" height="8.40"/><rect x="235.0" y="4.15" width="1" height="7.20"/><rect x="236.0" y="5.35" width="1" height="4.80"/><rect x="237.0" y="6.55" width="1" height="2.40"/><rect x="237.5" y="7.35" width="4.2" height="0.8"/><rect x="241.0" y="6.55" width="1" height="2.40"/><rect x="242.0" y="5.35" width="1" height="4.80"/><rect x="243.0" y="4.15" width="1" height="7.20"/><rect x="244.0" y="3.55" width="1" height="8.40"/><rect x="245.0" y="4.15" width="1" height="7.20"/><rect x="246.0" y="5.35" width="1" height="4.80"/><rect x="247.0" y="6.55" width="1" height="2.40"/><rect x="247.5" y="7.35" width="4.2" height="0.8"/><rect x="251.0" y="6.55" width="1" height="2.40"/><rect x="252.0" y="5.35" width="1" height="4.80"/><rect x="253.0" y="4.15" width="1" height="7.20"/><rect x="254.0" y="3.55" width="1" height="8.40"/><rect x="255.0" y="4.15" width="1" height="7.20"/><rect x="256.0" y="5.35" width="1" height="4.80"/><rect x="257.0" y="6.55" width="1" height="2.40"/><rect x="257.5" y="7.35" width="4.2" height="0.8"/><rect x="261.0" y="6.55" width="1" height="2.40"/><rect x="262.0" y="5.35" width="1" height="4.80"/><rect x="263.0" y="4.15" width="1" height="7.20"/><rect x="264.0" y="3.55" width="1" height="8.40"/><rect x="265.0" y="4.15" width="1" height="7.20"/><rect x="266.0" y="5.35" width="1" height="4.80"/><rect x="267.0" y="6.55" width="1" height="2.40"/><rect x="267.5" y="7.35" width="4.2" height="0.8"/><rect x="271.0" y="6.55" width="1" height="2.40"/><rect x="272.0" y="5.35" width="1" height="4.80"/><rect x="273.0" y="4.15" width="1" height="7.20"/><rect x="274.0" y="3.55" width="1" height="8.40"/><rect x="275.0" y="4.15" width="1" height="7.20"/><rect x="276.0" y="5.35" width="1" height="4.80"/><rect x="277.0" y="6.55" width="1" height="2.40"/><rect x="277.5" y="7.35" width="4.2" height="0.8"/><rect x="281.0" y="6.55" width="1" height="2.40"/><rect x="282.0" y="5.35" width="1" height="4.80"/><rect x="283.0" y="4.15" width="1" height="7.20"/><rect x="284.0" y="3.55" width="1" height="8.40"/><rect x="285.0" y="4.15" width="1" height="7.20"/><rect x="286.0" y="5.35" width="1" height="4.80"/><rect x="287.0" y="6.55" width="1" height="2.40"/><rect x="287.5" y="7.35" width="4.2" height="0.8"/><rect x="291.0" y="6.55" width="1" height="2.40"/><rect x="292.0" y="5.35" width="1" height="4.80"/><rect x="293.0" y="4.15" width="1" height="7.20"/><rect x="294.0" y="3.55" width="1" height="8.40"/><rect x="295.0" y="4.15" width="1" height="7.20"/><rect x="296.0" y="5.35" width="1" height="4.80"/><rect x="297.0" y="6.55" width="1" height="2.40"/><rect x="297.5" y="7.35" width="4.2" height="0.8"/><rect x="301.0" y="6.55" width="1" height="2.40"/><rect x="302.0" y="5.35" width="1" height="4.80"/><rect x="303.0" y="4.15" width="1" height="7.20"/><rect x="304.0" y="3.55" width="1" height="8.40"/><rect x="305.0" y="4.15" width="1" height="7.20"/><rect x="306.0" y="5.35" width="1" height="4.80"/><rect x="307.0" y="6.55" width="1" height="2.40"/><rect x="307.5" y="7.35" width="4.2" height="0.8"/><rect x="311.0" y="6.55" width="1" height="2.40"/><rect x="312.0" y="5.35" width="1" height="4.80"/><rect x="313.0" y="4.15" width="1" height="7.20"/><rect x="314.0" y="3.55" width="1" height="8.40"/><rect x="315.0" y="4.15" width="1" height="7.20"/><rect x="316.0" y="5.35" width="1" height="4.80"/><rect x="317.0" y="6.55" width="1" height="2.40"/><rect x="317.5" y="7.35" width="4.2" height="0.8"/><rect x="321.0" y="6.55" width="1" height="2.40"/><rect x="322.0" y="5.35" width="1" height="4.80"/><rect x="323.0" y="4.15" width="1" height="7.20"/><rect x="324.0" y="3.55" width="1" height="8.40"/><rect x="325.0" y="4.15" width="1" height="7.20"/><rect x="326.0" y="5.35" width="1" height="4.80"/><rect x="327.0" y="6.55" width="1" height="2.40"/><rect x="327.5" y="7.35" width="4.2" height="0.8"/><rect x="331.0" y="6.55" width="1" height="2.40"/><rect x="332.0" y="5.35" width="1" height="4.80"/><rect x="333.0" y="4.15" width="1" height="7.20"/><rect x="334.0" y="3.55" width="1" height="8.40"/><rect x="335.0" y="4.15" width="1" height="7.20"/><rect x="336.0" y="5.35" width="1" height="4.80"/><rect x="337.0" y="6.55" width="1" height="2.40"/><rect x="337.5" y="7.35" width="4.2" height="0.8"/><rect x="341.0" y="6.55" width="1" height="2.40"/><rect x="342.0" y="5.35" width="1" height="4.80"/><rect x="343.0" y="4.15" width="1" height="7.20"/><rect x="344.0" y="3.55" width="1" height="8.40"/><rect x="345.0" y="4.15" width="1" height="7.20"/><rect x="346.0" y="5.35" width="1" height="4.80"/><rect x="347.0" y="6.55" width="1" height="2.40"/><rect x="347.5" y="7.35" width="4.2" height="0.8"/><rect x="351.0" y="6.55" width="1" height="2.40"/><rect x="352.0" y="5.35" width="1" height="4.80"/><rect x="353.0" y="4.15" width="1" height="7.20"/><rect x="354.0" y="3.55" width="1" height="8.40"/><rect x="355.0" y="4.15" width="1" height="7.20"/><rect x="356.0" y="5.35" width="1" height="4.80"/><rect x="357.0" y="6.55" width="1" height="2.40"/><rect x="357.5" y="7.35" width="4.2" height="0.8"/><rect x="361.0" y="6.55" width="1" height="2.40"/><rect x="362.0" y="5.35" width="1" height="4.80"/><rect x="363.0" y="4.15" width="1" height="7.20"/><rect x="364.0" y="3.55" width="1" height="8.40"/><rect x="365.0" y="4.15" width="1" height="7.20"/><rect x="366.0" y="5.35" width="1" height="4.80"/><rect x="367.0" y="6.55" width="1" height="2.40"/><rect x="367.5" y="7.35" width="4.2" height="0.8"/><rect x="371.0" y="6.55" width="1" height="2.40"/><rect x="372.0" y="5.35" width="1" height="4.80"/><rect x="373.0" y="4.15" width="1" height="7.20"/><rect x="374.0" y="3.55" width="1" height="8.40"/><rect x="375.0" y="4.15" width="1" height="7.20"/><rect x="376.0" y="5.35" width="1" height="4.80"/><rect x="377.0" y="6.55" width="1" height="2.40"/><rect x="377.5" y="7.35" width="4.2" height="0.8"/><rect x="381.0" y="6.55" width="1" height="2.40"/><rect x="382.0" y="5.35" width="1" height="4.80"/><rect x="383.0" y="4.15" width="1" height="7.20"/><rect x="384.0" y="3.55" width="1" height="8.40"/><rect x="385.0" y="4.15" width="1" height="7.20"/><rect x="386.0" y="5.35" width="1" height="4.80"/><rect x="387.0" y="6.55" width="1" height="2.40"/><rect x="387.5" y="7.35" width="4.2" height="0.8"/><rect x="391.0" y="6.55" width="1" height="2.40"/><rect x="392.0" y="5.35" width="1" height="4.80"/><rect x="393.0" y="4.15" width="1" height="7.20"/><rect x="394.0" y="3.55" width="1" height="8.40"/><rect x="395.0" y="4.15" width="1" height="7.20"/><rect x="396.0" y="5.35" width="1" height="4.80"/><rect x="397.0" y="6.55" width="1" height="2.40"/><rect x="397.5" y="7.35" width="4.2" height="0.8"/><rect x="401.0" y="6.55" width="1" height="2.40"/><rect x="402.0" y="5.35" width="1" height="4.80"/><rect x="403.0" y="4.15" width="1" height="7.20"/><rect x="404.0" y="3.55" width="1" height="8.40"/><rect x="405.0" y="4.15" width="1" height="7.20"/><rect x="406.0" y="5.35" width="1" height="4.80"/><rect x="407.0" y="6.55" width="1" height="2.40"/><rect x="407.5" y="7.35" width="4.2" height="0.8"/><rect x="411.0" y="6.55" width="1" height="2.40"/><rect x="412.0" y="5.35" width="1" height="4.80"/><rect x="413.0" y="4.15" width="1" height="7.20"/><rect x="414.0" y="3.55" width="1" height="8.40"/><rect x="415.0" y="4.15" width="1" height="7.20"/><rect x="416.0" y="5.35" width="1" height="4.80"/><rect x="417.0" y="6.55" width="1" height="2.40"/><rect x="417.5" y="7.35" width="4.2" height="0.8"/><rect x="421.0" y="6.55" width="1" height="2.40"/><rect x="422.0" y="5.35" width="1" height="4.80"/><rect x="423.0" y="4.15" width="1" height="7.20"/><rect x="424.0" y="3.55" width="1" height="8.40"/><rect x="425.0" y="4.15" width="1" height="7.20"/><rect x="426.0" y="5.35" width="1" height="4.80"/><rect x="427.0" y="6.55" width="1" height="2.40"/><rect x="427.5" y="7.35" width="4.2" height="0.8"/><rect x="431.0" y="6.55" width="1" height="2.40"/><rect x="432.0" y="5.35" width="1" height="4.80"/><rect x="433.0" y="4.15" width="1" height="7.20"/><rect x="434.0" y="3.55" width="1" height="8.40"/><rect x="435.0" y="4.15" width="1" height="7.20"/><rect x="436.0" y="5.35" width="1" height="4.80"/><rect x="437.0" y="6.55" width="1" height="2.40"/><rect x="437.5" y="7.35" width="4.2" height="0.8"/><rect x="441.0" y="6.55" width="1" height="2.40"/><rect x="442.0" y="5.35" width="1" height="4.80"/><rect x="443.0" y="4.15" width="1" height="7.20"/><rect x="444.0" y="3.55" width="1" height="8.40"/><rect x="445.0" y="4.15" width="1" height="7.20"/><rect x="446.0" y="5.35" width="1" height="4.80"/><rect x="447.0" y="6.55" width="1" height="2.40"/><rect x="447.5" y="7.35" width="4.2" height="0.8"/><rect x="451.0" y="6.55" width="1" height="2.40"/><rect x="452.0" y="5.35" width="1" height="4.80"/><rect x="453.0" y="4.15" width="1" height="7.20"/><rect x="454.0" y="3.55" width="1" height="8.40"/><rect x="455.0" y="4.15" width="1" height="7.20"/><rect x="456.0" y="5.35" width="1" height="4.80"/><rect x="457.0" y="6.55" width="1" height="2.40"/><rect x="457.5" y="7.35" width="4.2" height="0.8"/><rect x="461.0" y="6.55" width="1" height="2.40"/><rect x="462.0" y="5.35" width="1" height="4.80"/><rect x="463.0" y="4.15" width="1" height="7.20"/><rect x="464.0" y="3.55" width="1" height="8.40"/><rect x="465.0" y="4.15" width="1" height="7.20"/><rect x="466.0" y="5.35" width="1" height="4.80"/><rect x="467.0" y="6.55" width="1" height="2.40"/><rect x="467.5" y="7.35" width="4.2" height="0.8"/><rect x="471.0" y="6.55" width="1" height="2.40"/><rect x="472.0" y="5.35" width="1" height="4.80"/><rect x="473.0" y="4.15" width="1" height="7.20"/><rect x="474.0" y="3.55" width="1" height="8.40"/><rect x="475.0" y="4.15" width="1" height="7.20"/><rect x="476.0" y="5.35" width="1" height="4.80"/><rect x="477.0" y="6.55" width="1" height="2.40"/><rect x="477.5" y="7.35" width="4.2" height="0.8"/><rect x="481.0" y="6.55" width="1" height="2.40"/><rect x="482.0" y="5.35" width="1" height="4.80"/><rect x="483.0" y="4.15" width="1" height="7.20"/><rect x="484.0" y="3.55" width="1" height="8.40"/><rect x="485.0" y="4.15" width="1" height="7.20"/><rect x="486.0" y="5.35" width="1" height="4.80"/><rect x="487.0" y="6.55" width="1" height="2.40"/><rect x="487.5" y="7.35" width="4.2" height="0.8"/><rect x="491.0" y="6.55" width="1" height="2.40"/><rect x="492.0" y="5.35" width="1" height="4.80"/><rect x="493.0" y="4.15" width="1" height="7.20"/><rect x="494.0" y="3.55" width="1" height="8.40"/><rect x="495.0" y="4.15" width="1" height="7.20"/><rect x="496.0" y="5.35" width="1" height="4.80"/><rect x="497.0" y="6.55" width="1" height="2.40"/><rect x="497.5" y="7.35" width="4.2" height="0.8"/><rect x="501.0" y="6.55" width="1" height="2.40"/><rect x="502.0" y="5.35" width="1" height="4.80"/><rect x="503.0" y="4.15" width="1" height="7.20"/><rect x="504.0" y="3.55" width="1" height="8.40"/><rect x="505.0" y="4.15" width="1" height="7.20"/><rect x="506.0" y="5.35" width="1" height="4.80"/><rect x="507.0" y="6.55" width="1" height="2.40"/><rect x="507.5" y="7.35" width="4.2" height="0.8"/><rect x="511.0" y="6.55" width="1" height="2.40"/><rect x="512.0" y="5.35" width="1" height="4.80"/><rect x="513.0" y="4.15" width="1" height="7.20"/><rect x="514.0" y="3.55" width="1" height="8.40"/><rect x="515.0" y="4.15" width="1" height="7.20"/><rect x="516.0" y="5.35" width="1" height="4.80"/><rect x="517.0" y="6.55" width="1" height="2.40"/><rect x="517.5" y="7.35" width="4.2" height="0.8"/><rect x="521.0" y="6.55" width="1" height="2.40"/><rect x="522.0" y="5.35" width="1" height="4.80"/><rect x="523.0" y="4.15" width="1" height="7.20"/><rect x="524.0" y="3.55" width="1" height="8.40"/><rect x="525.0" y="4.15" width="1" height="7.20"/><rect x="526.0" y="5.35" width="1" height="4.80"/><rect x="527.0" y="6.55" width="1" height="2.40"/><rect x="527.5" y="7.35" width="4.2" height="0.8"/><rect x="531.0" y="6.55" width="1" height="2.40"/><rect x="532.0" y="5.35" width="1" height="4.80"/><rect x="533.0" y="4.15" width="1" height="7.20"/><rect x="534.0" y="3.55" width="1" height="8.40"/><rect x="535.0" y="4.15" width="1" height="7.20"/><rect x="536.0" y="5.35" width="1" height="4.80"/><rect x="537.0" y="6.55" width="1" height="2.40"/><rect x="537.5" y="7.35" width="4.2" height="0.8"/><rect x="541.0" y="6.55" width="1" height="2.40"/><rect x="542.0" y="5.35" width="1" height="4.80"/><rect x="543.0" y="4.15" width="1" height="7.20"/><rect x="544.0" y="3.55" width="1" height="8.40"/><rect x="545.0" y="4.15" width="1" height="7.20"/><rect x="546.0" y="5.35" width="1" height="4.80"/><rect x="547.0" y="6.55" width="1" height="2.40"/><rect x="547.5" y="7.35" width="4.2" height="0.8"/><rect x="551.0" y="6.55" width="1" height="2.40"/><rect x="552.0" y="5.35" width="1" height="4.80"/><rect x="553.0" y="4.15" width="1" height="7.20"/><rect x="554.0" y="3.55" width="1" height="8.40"/><rect x="555.0" y="4.15" width="1" height="7.20"/><rect x="556.0" y="5.35" width="1" height="4.80"/><rect x="557.0" y="6.55" width="1" height="2.40"/><rect x="557.5" y="7.35" width="4.2" height="0.8"/><rect x="561.0" y="6.55" width="1" height="2.40"/><rect x="562.0" y="5.35" width="1" height="4.80"/><rect x="563.0" y="4.15" width="1" height="7.20"/><rect x="564.0" y="3.55" width="1" height="8.40"/><rect x="565.0" y="4.15" width="1" height="7.20"/><rect x="566.0" y="5.35" width="1" height="4.80"/><rect x="567.0" y="6.55" width="1" height="2.40"/><rect x="567.5" y="7.35" width="4.2" height="0.8"/><rect x="571.0" y="6.55" width="1" height="2.40"/><rect x="572.0" y="5.35" width="1" height="4.80"/><rect x="573.0" y="4.15" width="1" height="7.20"/><rect x="574.0" y="3.55" width="1" height="8.40"/><rect x="575.0" y="4.15" width="1" height="7.20"/><rect x="576.0" y="5.35" width="1" height="4.80"/><rect x="577.0" y="6.55" width="1" height="2.40"/><rect x="577.5" y="7.35" width="4.2" height="0.8"/><rect x="581.0" y="6.55" width="1" height="2.40"/><rect x="582.0" y="5.35" width="1" height="4.80"/><rect x="583.0" y="4.15" width="1" height="7.20"/><rect x="584.0" y="3.55" width="1" height="8.40"/><rect x="585.0" y="4.15" width="1" height="7.20"/><rect x="586.0" y="5.35" width="1" height="4.80"/><rect x="587.0" y="6.55" width="1" height="2.40"/><rect x="587.5" y="7.35" width="4.2" height="0.8"/><rect x="591.0" y="6.55" width="1" height="2.40"/><rect x="592.0" y="5.35" width="1" height="4.80"/><rect x="593.0" y="4.15" width="1" height="7.20"/><rect x="594.0" y="3.55" width="1" height="8.40"/><rect x="595.0" y="4.15" width="1" height="7.20"/><rect x="596.0" y="5.35" width="1" height="4.80"/><rect x="597.0" y="6.55" width="1" height="2.40"/><rect x="597.5" y="7.35" width="4.2" height="0.8"/><rect x="601.0" y="6.55" width="1" height="2.40"/><rect x="602.0" y="5.35" width="1" height="4.80"/><rect x="603.0" y="4.15" width="1" height="7.20"/><rect x="604.0" y="3.55" width="1" height="8.40"/><rect x="605.0" y="4.15" width="1" height="7.20"/><rect x="606.0" y="5.35" width="1" height="4.80"/><rect x="607.0" y="6.55" width="1" height="2.40"/><rect x="607.5" y="7.35" width="4.2" height="0.8"/><rect x="611.0" y="6.55" width="1" height="2.40"/><rect x="612.0" y="5.35" width="1" height="4.80"/><rect x="613.0" y="4.15" width="1" height="7.20"/><rect x="614.0" y="3.55" width="1" height="8.40"/><rect x="615.0" y="4.15" width="1" height="7.20"/><rect x="616.0" y="5.35" width="1" height="4.80"/><rect x="617.0" y="6.55" width="1" height="2.40"/><rect x="617.5" y="7.35" width="4.2" height="0.8"/><rect x="621.0" y="6.55" width="1" height="2.40"/><rect x="622.0" y="5.35" width="1" height="4.80"/><rect x="623.0" y="4.15" width="1" height="7.20"/><rect x="624.0" y="3.55" width="1" height="8.40"/><rect x="625.0" y="4.15" width="1" height="7.20"/><rect x="626.0" y="5.35" width="1" height="4.80"/><rect x="627.0" y="6.55" width="1" height="2.40"/><rect x="627.5" y="7.35" width="4.2" height="0.8"/><rect x="631.0" y="6.55" width="1" height="2.40"/><rect x="632.0" y="5.35" width="1" height="4.80"/><rect x="633.0" y="4.15" width="1" height="7.20"/><rect x="634.0" y="3.55" width="1" height="8.40"/><rect x="635.0" y="4.15" width="1" height="7.20"/><rect x="636.0" y="5.35" width="1" height="4.80"/><rect x="637.0" y="6.55" width="1" height="2.40"/><rect x="637.5" y="7.35" width="4.2" height="0.8"/><rect x="641.0" y="6.55" width="1" height="2.40"/><rect x="642.0" y="5.35" width="1" height="4.80"/><rect x="643.0" y="4.15" width="1" height="7.20"/><rect x="644.0" y="3.55" width="1" height="8.40"/><rect x="645.0" y="4.15" width="1" height="7.20"/><rect x="646.0" y="5.35" width="1" height="4.80"/><rect x="647.0" y="6.55" width="1" height="2.40"/><rect x="647.5" y="7.35" width="4.2" height="0.8"/><rect x="651.0" y="6.55" width="1" height="2.40"/><rect x="652.0" y="5.35" width="1" height="4.80"/><rect x="653.0" y="4.15" width="1" height="7.20"/><rect x="654.0" y="3.55" width="1" height="8.40"/><rect x="655.0" y="4.15" width="1" height="7.20"/><rect x="656.0" y="5.35" width="1" height="4.80"/><rect x="657.0" y="6.55" width="1" height="2.40"/><rect x="657.5" y="7.35" width="4.2" height="0.8"/><rect x="661.0" y="6.55" width="1" height="2.40"/><rect x="662.0" y="5.35" width="1" height="4.80"/><rect x="663.0" y="4.15" width="1" height="7.20"/><rect x="664.0" y="3.55" width="1" height="8.40"/><rect x="665.0" y="4.15" width="1" height="7.20"/><rect x="666.0" y="5.35" width="1" height="4.80"/><rect x="667.0" y="6.55" width="1" height="2.40"/><rect x="667.5" y="7.35" width="4.2" height="0.8"/><rect x="671.0" y="6.55" width="1" height="2.40"/><rect x="672.0" y="5.35" width="1" height="4.80"/><rect x="673.0" y="4.15" width="1" height="7.20"/><rect x="674.0" y="3.55" width="1" height="8.40"/><rect x="675.0" y="4.15" width="1" height="7.20"/><rect x="676.0" y="5.35" width="1" height="4.80"/><rect x="677.0" y="6.55" width="1" height="2.40"/><rect x="677.5" y="7.35" width="4.2" height="0.8"/><rect x="681.0" y="6.55" width="1" height="2.40"/><rect x="682.0" y="5.35" width="1" height="4.80"/><rect x="683.0" y="4.15" width="1" height="7.20"/><rect x="684.0" y="3.55" width="1" height="8.40"/><rect x="685.0" y="4.15" width="1" height="7.20"/><rect x="686.0" y="5.35" width="1" height="4.80"/><rect x="687.0" y="6.55" width="1" height="2.40"/><rect x="687.5" y="7.35" width="4.2" height="0.8"/><rect x="691.0" y="6.55" width="1" height="2.40"/><rect x="692.0" y="5.35" width="1" height="4.80"/><rect x="693.0" y="4.15" width="1" height="7.20"/><rect x="694.0" y="3.55" width="1" height="8.40"/><rect x="695.0" y="4.15" width="1" height="7.20"/><rect x="696.0" y="5.35" width="1" height="4.80"/><rect x="697.0" y="6.55" width="1" height="2.40"/><rect x="697.5" y="7.35" width="4.2" height="0.8"/><rect x="701.0" y="6.55" width="1" height="2.40"/><rect x="702.0" y="5.35" width="1" height="4.80"/><rect x="703.0" y="4.15" width="1" height="7.20"/><rect x="704.0" y="3.55" width="1" height="8.40"/><rect x="705.0" y="4.15" width="1" height="7.20"/><rect x="706.0" y="5.35" width="1" height="4.80"/><rect x="707.0" y="6.55" width="1" height="2.40"/><rect x="707.5" y="7.35" width="4.2" height="0.8"/><rect x="711.0" y="6.55" width="1" height="2.40"/><rect x="712.0" y="5.35" width="1" height="4.80"/><rect x="713.0" y="4.15" width="1" height="7.20"/><rect x="714.0" y="3.55" width="1" height="8.40"/><rect x="715.0" y="4.15" width="1" height="7.20"/><rect x="716.0" y="5.35" width="1" height="4.80"/><rect x="717.0" y="6.55" width="1" height="2.40"/><rect x="717.5" y="7.35" width="4.2" height="0.8"/><rect x="721.0" y="6.55" width="1" height="2.40"/><rect x="722.0" y="5.35" width="1" height="4.80"/><rect x="723.0" y="4.15" width="1" height="7.20"/><rect x="724.0" y="3.55" width="1" height="8.40"/><rect x="725.0" y="4.15" width="1" height="7.20"/><rect x="726.0" y="5.35" width="1" height="4.80"/><rect x="727.0" y="6.55" width="1" height="2.40"/><rect x="727.5" y="7.35" width="4.2" height="0.8"/><rect x="731.0" y="6.55" width="1" height="2.40"/><rect x="732.0" y="5.35" width="1" height="4.80"/><rect x="733.0" y="4.15" width="1" height="7.20"/><rect x="734.0" y="3.55" width="1" height="8.40"/><rect x="735.0" y="4.15" width="1" height="7.20"/><rect x="736.0" y="5.35" width="1" height="4.80"/><rect x="737.0" y="6.55" width="1" height="2.40"/><rect x="737.5" y="7.35" width="4.2" height="0.8"/></g></svg>
<svg style="left:199.5px;top:557.5px" width="8" height="9"><path d="M2.8 7V1.3L7 0.5V6" fill="none" stroke="#e6ecfb" stroke-width="0.8"/><circle cx="1.8" cy="7" r="1.2" fill="none" stroke="#e6ecfb" stroke-width="0.8"/><circle cx="6" cy="6.2" r="1.2" fill="none" stroke="#e6ecfb" stroke-width="0.8"/></svg>
<div class="a" style="left:211.5px;top:558.3px;font-size:7px;line-height:7px;color:#f2f5ff;-webkit-text-stroke:0.2px #f2f5ff;white-space:nowrap">Upbeat Funky Good Times</div>
<!-- playhead -->
<div class="a" style="left:491.5px;top:465px;width:1.2px;height:115px;background:#e8e8ee"></div>
<svg style="left:488.5px;top:462px" width="8" height="8"><path d="M0.5 1a0.8 0.8 0 0 1 0.8-0.8h5.4a0.8 0.8 0 0 1 0.8 0.8v3.2L4 7L0.5 4.2Z" fill="#f2f2f6"/></svg>

<div class="a" style="left:189px;top:326px;width:6.5px;height:20px;border-radius:0 3px 3px 0;background:#1f1f2a"></div>
<svg style="left:190.5px;top:333px" width="4" height="6"><path d="M3 0.6L1 3L3 5.4" fill="none" stroke="#a0a0aa" stroke-width="0.8"/></svg>
<!--MAIN-->

<!-- right sidebar -->
<div class="a" style="left:926px;top:21px;width:36px;height:559px;background:#1a1a25"></div>
<div class="a" style="left:926px;top:21px;width:2.5px;height:389px;background:#1e1e29"></div>
<svg style="left:938px;top:29px" width="12" height="11"><path d="M1 3.5H3.5L6.5 1V10L3.5 7.5H1Z" fill="none" stroke="#8e8e98" stroke-width="0.9"/><path d="M8.3 3.5Q9.3 5.5 8.3 7.5M9.8 2.3Q11.3 5.5 9.8 8.7" fill="none" stroke="#8e8e98" stroke-width="0.8"/></svg>
<div class="rl" style="top:42px">Audio</div>
<svg style="left:939px;top:61.5px" width="11" height="11"><circle cx="5.5" cy="5.5" r="4.6" fill="none" stroke="#8e8e98" stroke-width="0.9"/><path d="M5.5 0.9A4.6 4.6 0 0 1 5.5 10.1Z" fill="#8e8e98"/></svg>
<div class="rl" style="top:74.5px">Colour</div>
<svg style="left:939.5px;top:93.5px" width="10" height="10"><rect x="0.5" y="0.5" width="9" height="9" rx="1.3" fill="none" stroke="#8e8e98" stroke-width="0.9"/><path d="M3.5 0.5V9.5M3.5 5.5H9.5" stroke="#8e8e98" stroke-width="0.9"/></svg>
<div class="rl" style="top:105.8px">Layout</div>
<svg style="left:939.5px;top:125.5px" width="10" height="10"><rect x="1.5" y="1.5" width="7" height="7" fill="none" stroke="#8e8e98" stroke-width="0.7"/><g fill="#8e8e98"><rect x="0.7" y="0.7" width="1.6" height="1.6"/><rect x="7.7" y="0.7" width="1.6" height="1.6"/><rect x="0.7" y="7.7" width="1.6" height="1.6"/><rect x="7.7" y="7.7" width="1.6" height="1.6"/></g></svg>
<div class="rl" style="top:138px">Transform</div>
<svg style="left:939px;top:157px" width="11" height="11"><path d="M1 10L7 4" stroke="#8e8e98" stroke-width="1.1"/><path d="M8 0.5V3M6.8 1.8H9.2M3 1V2.6M2.2 1.8H3.8M9.5 6V8M8.5 7H10.5" stroke="#8e8e98" stroke-width="0.7"/></svg>
<div class="rl" style="top:170px">Filters</div>
<svg style="left:939px;top:189px" width="11" height="11"><circle cx="5.5" cy="5.5" r="4.6" fill="none" stroke="#8e8e98" stroke-width="0.9"/><path d="M5.5 0.9V10.1M7.3 1.4V9.6M8.8 2.5V8.5" stroke="#8e8e98" stroke-width="0.7"/></svg>
<div class="rl" style="top:202px">Fade</div>
<svg style="left:938.5px;top:222px" width="12" height="8"><path d="M1 6.5A5 5 0 0 1 11 6.5" fill="none" stroke="#8e8e98" stroke-width="0.9"/><path d="M6 6L8.5 2.5" stroke="#8e8e98" stroke-width="0.9"/></svg>
<div class="rl" style="top:234px">Speed</div>
<svg style="left:940px;top:254px" width="8" height="9"><path d="M0.5 1.8V0.5H7.5V1.8M4 0.5V8.5M2.6 8.5H5.4" fill="none" stroke="#8e8e98" stroke-width="0.8"/></svg>
<div class="rl" style="top:266px">Text</div>
<div class="a" style="left:920px;top:207.5px;width:6px;height:19.5px;border-radius:3px 0 0 3px;background:#1f1f2a;border:0.6px solid #2b2b35;border-right:none"></div>
<svg style="left:921.5px;top:214.5px" width="4" height="6"><path d="M3 0.6L1 3L3 5.4" fill="none" stroke="#55555f" stroke-width="0.7"/></svg>


<!-- taskbar -->
<div class="a" style="left:4px;top:580px;width:958px;height:24px;background:linear-gradient(90deg,#e3edf8,#dde7f3 40%,#e0e9f4)"></div>
<!-- weather -->
<svg style="left:13px;top:585px" width="16" height="15"><defs><radialGradient id="sun" cx=".4" cy=".4" r=".7"><stop offset="0" stop-color="#ffd86a"/><stop offset="1" stop-color="#f39a1e"/></radialGradient></defs><circle cx="7" cy="7" r="6.2" fill="url(#sun)"/><path d="M6 12.5a2.2 2.2 0 0 1 0.3-4.3a3 3 0 0 1 5.6-0.6a2.4 2.4 0 0 1 0.6 4.8Z" fill="#dfeaf5"/><path d="M7 12a1.8 1.8 0 0 1 0.5-3a2.5 2.5 0 0 1 4.5-0.2a2 2 0 0 1 0.5 3.4Z" fill="#a9c9e6" opacity=".8"/></svg>
<div class="a" style="left:30px;top:584.5px;font-size:6.6px;line-height:7px;color:#1b1b1b">68°F</div>
<div class="a" style="left:30px;top:593.5px;font-size:5.7px;line-height:7px;color:#5e5e5e">Mostly Sunny</div>
<!-- center icons -->
<svg style="left:0;top:583px" width="966" height="19">
<g fill="#1f8ae0"><rect x="400.2" y="3.8" width="5.4" height="5.4"/><rect x="406.1" y="3.8" width="5.4" height="5.4"/><rect x="400.2" y="9.7" width="5.4" height="5.4"/><rect x="406.1" y="9.7" width="5.4" height="5.4"/></g>
<circle cx="427" cy="8.2" r="4" fill="none" stroke="#222" stroke-width="1.2"/><path d="M429.9 11.1L432.8 14" stroke="#222" stroke-width="1.4"/>
<rect x="447" y="6" width="6.5" height="6.5" fill="#eee" stroke="#999" stroke-width="0.4"/><rect x="444.5" y="8" width="6.5" height="6.5" fill="#222"/>
<circle cx="472" cy="9" r="5.5" fill="#6a63c9"/><path d="M468.5 13.5L467.5 15.5L470.5 14.3" fill="#6a63c9"/><rect x="469.2" y="7" width="4" height="3.6" rx="0.6" fill="#fff"/><path d="M473.2 8L475 7V10.6L473.2 9.6" fill="#fff"/>
<path d="M488.5 4.5H493L494.5 6H500V14H488.5Z" fill="#f7c244"/><rect x="488.5" y="8" width="11.5" height="6" fill="#f9d36b"/><rect x="490.5" y="11.5" width="7.5" height="2.2" fill="#2a78d6"/>
<circle cx="516" cy="9.3" r="5.4" fill="#2e9ad8"/><path d="M511.5 9A5 5 0 0 1 520.5 8.5Q520 11 516.5 11Q514 11 514.2 9.3Q516 7.5 517.5 8.2" fill="#4fd18a"/><circle cx="516.5" cy="10" r="1.8" fill="#dfe8f3"/>
<rect x="532.5" y="5" width="11" height="10" rx="1.2" fill="#1f5fae"/><rect x="535" y="3.5" width="6" height="2.2" rx="0.8" fill="none" stroke="#1f5fae" stroke-width="0.8"/><g><rect x="536" y="7.5" width="1.8" height="1.8" fill="#f35325"/><rect x="538.2" y="7.5" width="1.8" height="1.8" fill="#81bc06"/><rect x="536" y="9.7" width="1.8" height="1.8" fill="#05a6f0"/><rect x="538.2" y="9.7" width="1.8" height="1.8" fill="#ffba08"/></g>
<rect x="551" y="0.3" width="18.5" height="18.5" rx="2" fill="#f9fbfe"/>
<path d="M553.5 5.8L565.5 2.5L566.5 4.8L554.5 7.8Z" fill="#c46ae6"/><rect x="554" y="7.5" width="12.5" height="7.5" rx="0.8" fill="#8b5cf0"/><rect x="554" y="7.5" width="12.5" height="3.5" fill="#b46ae8"/>
<rect x="556.5" y="17" width="7" height="1.4" rx="0.7" fill="#2a72d0"/>
</svg>
<!-- tray -->
<svg style="left:0;top:583px" width="966" height="19">
<path d="M852.5 10.5L855 8L857.5 10.5" fill="none" stroke="#333" stroke-width="0.8"/>
<path d="M868 12a2.5 2.5 0 0 1 0.3-4.8a3.3 3.3 0 0 1 6.2-0.3a2.5 2.5 0 0 1 0.3 5.1Z" fill="#888" stroke="#555" stroke-width="0.5"/>
<path d="M882.5 7.5Q886 4.5 889.5 7.5M883.7 8.8Q886 7 888.3 8.8M884.9 10.1Q886 9.3 887.1 10.1L886 11.3Z" fill="none" stroke="#444" stroke-width="0.8"/>
<path d="M894.5 7.5H896L898.5 5.5V12L896 10H894.5Z" fill="none" stroke="#444" stroke-width="0.8"/><path d="M900 7Q901 8.7 900 10.5" fill="none" stroke="#444" stroke-width="0.7"/>
<rect x="906.5" y="6.5" width="7.5" height="4.5" rx="1.2" fill="#444"/><rect x="907.3" y="7.3" width="5" height="2.9" rx="0.4" fill="#111"/>
</svg>
<div class="a" style="left:912px;top:584.5px;width:40px;text-align:right;font-size:6px;line-height:7px;color:#1e1e1e">11:11 AM</div>
<div class="a" style="left:912px;top:592.5px;width:40px;text-align:right;font-size:5.9px;line-height:7px;color:#1e1e1e">10/27/2022</div>

</div></body></html>
